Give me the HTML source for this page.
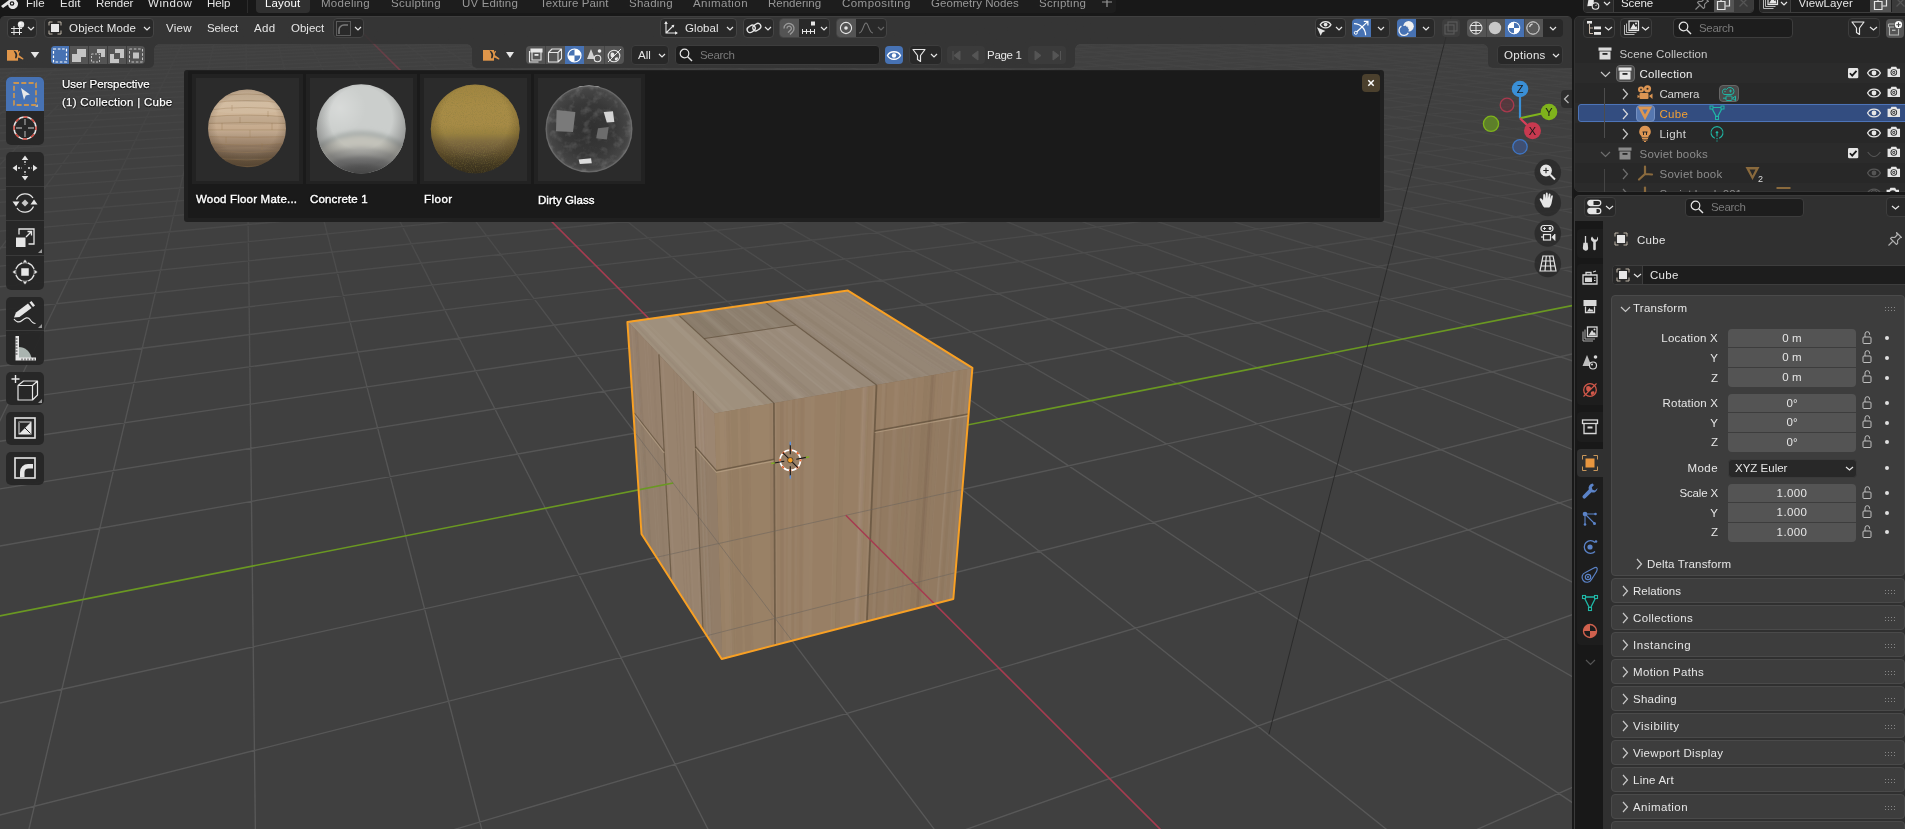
<!DOCTYPE html>
<html lang="en"><head><meta charset="utf-8"><title>Blender</title>
<style>
*{box-sizing:border-box;margin:0;padding:0}
html,body{width:1905px;height:829px;overflow:hidden;background:#181818}
body{position:relative;font-family:"Liberation Sans",sans-serif;font-size:11.5px;color:#e6e6e6;line-height:14px;white-space:nowrap}
.a{position:absolute}
.t{position:absolute;height:14px;line-height:14px}
.btn{position:absolute;background:#282828;border:1px solid #3d3d3d;border-radius:4px}
.btn.hd{background:rgba(40,40,40,.92);border-color:#444}
.blue{background:#4772b3!important;border-color:#4772b3!important}
.fld{position:absolute;background:#1d1d1d;border:1px solid #3d3d3d;border-radius:4px}
.num{position:absolute;background:#545454;color:#e6e6e6;text-align:center;line-height:19px;height:19px;left:1728px;width:128px}
.lbl{position:absolute;text-align:right;width:110px;left:1608px;height:14px}
.pan{position:absolute;left:1611px;width:293.5px;background:#3d3d3d;border-radius:4px;border:1px solid #4a4a4a}
.pan .h{position:absolute;left:21px;top:4px;color:#e6e6e6}
svg{position:absolute;overflow:visible}
.ic{position:absolute}
.sh{text-shadow:0 0 2px #000,0 1px 1px #000}
.gr{color:#989898}
#root{position:absolute;left:0;top:0;width:1905px;height:829px;will-change:transform}
</style></head><body><div id="root">
<!-- TOP BAR -->
<div class="a" id="topbar" style="left:0;top:0;width:1905px;height:16px;background:#181818"></div>
<svg class="ic" style="left:0;top:-6px" width="18" height="16" viewBox="0 0 18 16"><path d="M1 12 L9 6 L4 6 L4 4 L11 4 L9.5 2.5 L11 1.5 L16.5 6.5 A5 5 0 1 1 8 10.5 L3 14 Z" fill="#e6e6e6"/><circle cx="12" cy="9.5" r="2.3" fill="#181818"/><circle cx="12" cy="9.5" r="1.1" fill="#e6e6e6"/></svg>
<div class="t" style="left:26px;top:-4px">File</div>
<div class="t" style="left:60px;top:-4px;letter-spacing:0.22px">Edit</div>
<div class="t" style="left:96px;top:-4px;letter-spacing:-0.08px">Render</div>
<div class="t" style="left:148px;top:-4px;letter-spacing:0.56px">Window</div>
<div class="t" style="left:207px;top:-4px;letter-spacing:-0.05px">Help</div>
<div class="a" style="left:247px;top:-2px;width:1px;height:14.5px;background:#2c2c2c"></div>
<div class="a" style="left:256px;top:-4px;width:860px;height:16.5px;background:#1d1d1d;border-radius:4px"></div>
<div class="a" style="left:256px;top:-4px;width:54px;height:16.5px;background:#303030;border-radius:4px"></div>
<div class="t" style="left:265px;top:-4px;color:#fff;letter-spacing:0.15px">Layout</div>
<div class="t gr" style="left:321px;top:-4px;letter-spacing:0.29px">Modeling</div>
<div class="t gr" style="left:391px;top:-4px;letter-spacing:0.3px">Sculpting</div>
<div class="t gr" style="left:462px;top:-4px;letter-spacing:0.16px">UV Editing</div>
<div class="t gr" style="left:540px;top:-4px;letter-spacing:0.11px">Texture Paint</div>
<div class="t gr" style="left:629px;top:-4px;letter-spacing:0.23px">Shading</div>
<div class="t gr" style="left:693px;top:-4px;letter-spacing:0.43px">Animation</div>
<div class="t gr" style="left:768px;top:-4px">Rendering</div>
<div class="t gr" style="left:842px;top:-4px;letter-spacing:0.46px">Compositing</div>
<div class="t gr" style="left:931px;top:-4px;letter-spacing:0.06px">Geometry Nodes</div>
<div class="t gr" style="left:1039px;top:-4px;letter-spacing:0.28px">Scripting</div>
<svg class="ic" style="left:1101px;top:-4px" width="12" height="12"><path d="M6 1v10M1 6h10" stroke="#989898" stroke-width="1.2" fill="none"/></svg>
<!-- scene selector -->
<div class="a" style="left:1582.5px;top:-8px;width:171px;height:20.5px;background:#1d1d1d;border:1px solid #3d3d3d;border-radius:4px"></div>
<div class="a" style="left:1583.5px;top:-7px;width:30px;height:18.5px;background:#282828;border-right:1px solid #3d3d3d;border-radius:3px 0 0 3px"></div>
<svg class="ic" style="left:1585px;top:-5.5px" width="16" height="16" viewBox="0 0 16 16"><path d="M3 1l5 0 1.5 9-6 2z" fill="#e6e6e6" transform="rotate(12 6 6)"/><circle cx="10.5" cy="11" r="3.3" fill="#282828" stroke="#e6e6e6" stroke-width="1.1"/><path d="M10.5 11l1.5-1.5" stroke="#e6e6e6" stroke-width="1"/></svg>
<svg class="ic" style="left:1603px;top:1px" width="8" height="6"><path d="M1 1l3 3 3-3" stroke="#e6e6e6" stroke-width="1.2" fill="none"/></svg>
<div class="t" style="left:1621px;top:-4px;letter-spacing:-0.1px">Scene</div>
<svg class="ic" style="left:1694px;top:-5px" width="16" height="16" viewBox="0 0 16 16"><path d="M9.5 1.5l5 5-1.5.3-2.5 2.5.2 3-1.2 1.2-6-6 1.2-1.2 3 .2 2.5-2.5zM6 10l-4.5 4.5" fill="none" stroke="#8a8a8a" stroke-width="1.1" stroke-linejoin="round"/></svg>
<div class="a" style="left:1713.5px;top:-7px;width:20px;height:18.5px;background:#545454"></div>
<svg class="ic" style="left:1716px;top:-4.5px" width="15" height="15" viewBox="0 0 15 15"><path d="M1.5 5.5h7.5v8h-7.5z" fill="none" stroke="#e6e6e6" stroke-width="1.2"/><path d="M5 5V1.5h8.5v8.5H9.5" fill="none" stroke="#e6e6e6" stroke-width="1.2"/></svg>
<div class="a" style="left:1734px;top:-7px;width:18.5px;height:18.5px;background:#3a3a3a;border-radius:0 3px 3px 0"></div>
<svg class="ic" style="left:1738px;top:-3px" width="11" height="11"><path d="M1.5 1.5l8 8M9.5 1.5l-8 8" stroke="#555" stroke-width="1.2"/></svg>
<div class="a" style="left:1759px;top:-8px;width:160px;height:20.5px;background:#1d1d1d;border:1px solid #3d3d3d;border-radius:4px"></div>
<div class="a" style="left:1760px;top:-7px;width:31px;height:18.5px;background:#282828;border-right:1px solid #3d3d3d;border-radius:3px 0 0 3px"></div>
<svg class="ic" style="left:1762px;top:-6px" width="17" height="16" viewBox="0 0 17 16"><path d="M1.5 5v9.5h10M3.5 3.5v9h10" stroke="#b8b8b8" stroke-width="1" fill="none"/><rect x="6" y="1" width="9.5" height="9.5" fill="none" stroke="#e6e6e6" stroke-width="1.2"/><path d="M7 9.5l3.5-6 2 3.5 1-1 1 3.5z" fill="#e6e6e6"/></svg>
<svg class="ic" style="left:1780px;top:1px" width="8" height="6"><path d="M1 1l3 3 3-3" stroke="#e6e6e6" stroke-width="1.2" fill="none"/></svg>
<div class="t" style="left:1798.5px;top:-4px;letter-spacing:0.1px">ViewLayer</div>
<div class="a" style="left:1870px;top:-7px;width:21px;height:18.5px;background:#545454"></div>
<svg class="ic" style="left:1873px;top:-4.5px" width="15" height="15" viewBox="0 0 15 15"><path d="M1.5 5.5h7.5v8h-7.5z" fill="none" stroke="#e6e6e6" stroke-width="1.2"/><path d="M5 5V1.5h8.5v8.5H9.5" fill="none" stroke="#e6e6e6" stroke-width="1.2"/></svg>
<div class="a" style="left:1891.5px;top:-7px;width:18.5px;height:18.5px;background:#3a3a3a"></div>
<svg class="ic" style="left:1895px;top:-3px" width="11" height="11"><path d="M1.5 1.5l8 8M9.5 1.5l-8 8" stroke="#555" stroke-width="1.2"/></svg>
<!-- 3D VIEWPORT -->
<div class="a" id="vp" style="left:0;top:16px;width:1572px;height:813px;background:#404040;border-radius:5px 5px 0 0;overflow:hidden">
<svg style="left:0;top:-16px" width="1572" height="829" viewBox="0 0 1572 829">
<defs>
<linearGradient id="gfade" x1="0" y1="-85" x2="0" y2="829" gradientUnits="userSpaceOnUse">
<stop offset="0" stop-color="#000000"/><stop offset="0.06" stop-color="#141414"/><stop offset="0.112" stop-color="#232323"/><stop offset="0.171" stop-color="#282828"/><stop offset="0.237" stop-color="#333333"/><stop offset="0.313" stop-color="#565656"/><stop offset="0.42" stop-color="#9e9e9e"/><stop offset="0.53" stop-color="#d8d8d8"/><stop offset="0.6" stop-color="#eaeaea"/><stop offset="1" stop-color="#ffffff"/>
</linearGradient>
<mask id="gmask" maskUnits="userSpaceOnUse" x="0" y="0" width="1572" height="829"><rect x="0" y="0" width="1572" height="829" fill="url(#gfade)"/></mask>
<linearGradient id="afade" x1="0" y1="-85" x2="0" y2="829" gradientUnits="userSpaceOnUse"><stop offset="0" stop-color="#000000"/><stop offset="0.08" stop-color="#070707"/><stop offset="0.112" stop-color="#141414"/><stop offset="0.14" stop-color="#4c4c4c"/><stop offset="0.171" stop-color="#7f7f7f"/><stop offset="0.237" stop-color="#bfbfbf"/><stop offset="0.36" stop-color="#ffffff"/><stop offset="1" stop-color="#ffffff"/></linearGradient>
<mask id="amask" maskUnits="userSpaceOnUse" x="0" y="0" width="1572" height="829"><rect x="0" y="0" width="1572" height="829" fill="url(#afade)"/></mask>
<linearGradient id="wtop" x1="628" y1="322" x2="972" y2="368" gradientUnits="userSpaceOnUse"><stop offset="0" stop-color="#9c8f7b"/><stop offset="1" stop-color="#9a8b78"/></linearGradient>
<linearGradient id="wleft" x1="628" y1="0" x2="722" y2="0" gradientUnits="userSpaceOnUse"><stop offset="0" stop-color="#9d8771"/><stop offset="1" stop-color="#9a826a"/></linearGradient>
<linearGradient id="wright" x1="715" y1="0" x2="972" y2="0" gradientUnits="userSpaceOnUse"><stop offset="0" stop-color="#a38769"/><stop offset="0.5" stop-color="#a0866a"/><stop offset="1" stop-color="#987f66"/></linearGradient>
<clipPath id="cubeclip"><polygon points="627.4,322.0 847.9,290.6 972.4,367.9 953.3,599.0 721.7,659.0 641.5,534.0"/></clipPath>
</defs>
<g mask="url(#gmask)"><path d="M-2.0 10.7L25.5 10.0M-2.0 12.2L80.1 10.0M-2.0 13.7L134.7 10.0M-2.0 15.3L189.2 10.0M-2.0 16.9L243.6 10.0M-2.0 18.6L298.1 10.0M-2.0 20.3L352.4 10.0M-2.0 22.1L406.8 10.0M-2.0 24.0L461.1 10.0M-2.0 25.9L515.3 10.0M-2.0 27.9L569.5 10.0M-2.0 29.9L623.7 10.0M-2.0 32.1L677.8 10.0M-2.0 34.3L731.9 10.0M-2.0 36.6L785.9 10.0M-2.0 39.0L839.9 10.0M-2.0 41.5L893.9 10.0M-2.0 44.0L947.8 10.0M-2.0 46.7L1001.6 10.0M-2.0 49.5L1055.5 10.0M-2.0 52.5L1109.2 10.0M-2.0 55.5L1163.0 10.0M-2.0 58.7L1216.7 10.0M-2.0 62.1L1270.3 10.0M-2.0 65.6L1323.9 10.0M-2.0 69.3L1377.5 10.0M-2.0 73.1L1431.0 10.0M-2.0 77.2L1484.5 10.0M-2.0 81.5L1537.9 10.0M-2.0 86.0L1574.0 10.8M-2.0 90.7L1574.0 13.5M-2.0 95.7L1574.0 16.3M-2.0 101.1L1574.0 19.2M-2.0 106.7L1574.0 22.3M-2.0 112.7L1574.0 25.7M-2.0 119.1L1574.0 29.2M-2.0 125.9L1574.0 33.0M-2.0 133.1L1574.0 37.0M-2.0 140.9L1574.0 41.3M-2.0 149.3L1574.0 46.0M-2.0 158.3L1574.0 51.0M-2.0 168.0L1574.0 56.4M-2.0 178.6L1574.0 62.2M-2.0 190.0L1574.0 68.6M-2.0 202.5L1574.0 75.5M-2.0 216.2L1574.0 83.1M-2.0 231.3L1574.0 91.5M-2.0 247.9L1574.0 100.7M-2.0 266.3L1574.0 111.0M-2.0 287.0L1574.0 122.4M-2.0 310.2L1574.0 135.3M-2.0 336.5L1574.0 149.9M-2.0 366.5L1574.0 166.6M-2.0 401.2L1574.0 185.8M-2.0 441.5L1574.0 208.2M-2.0 489.2L1574.0 234.7M-2.0 546.4L1574.0 266.4M-2.0 703.5L1574.0 353.6M-2.0 815.5L1574.0 415.8M449.4 831.0L1574.0 498.5M961.7 831.0L1574.0 614.0M1473.5 831.0L1574.0 786.6M9.5 10.0L-2.0 14.7M33.2 10.0L-2.0 25.8M56.8 10.0L-2.0 39.8M80.4 10.0L-2.0 57.8M104.0 10.0L-2.0 81.9M127.7 10.0L-2.0 115.7M151.3 10.0L-2.0 166.5M174.9 10.0L-2.0 251.9M198.4 10.0L-2.0 424.7M222.0 10.0L28.5 831.0M245.6 10.0L255.4 831.0M269.2 10.0L482.2 831.0M292.7 10.0L708.9 831.0M316.3 10.0L935.5 831.0M363.3 10.0L1388.5 831.0M386.9 10.0L1574.0 803.7M410.4 10.0L1574.0 677.7M433.9 10.0L1574.0 583.0M457.4 10.0L1574.0 509.3M480.9 10.0L1574.0 450.2M504.4 10.0L1574.0 401.8M527.8 10.0L1574.0 361.5M551.3 10.0L1574.0 327.3M574.8 10.0L1574.0 298.0M598.2 10.0L1574.0 272.6M621.7 10.0L1574.0 250.4M645.1 10.0L1574.0 230.7M668.5 10.0L1574.0 213.3M691.9 10.0L1574.0 197.7M715.4 10.0L1574.0 183.6M738.8 10.0L1574.0 170.9M762.1 10.0L1574.0 159.3M785.5 10.0L1574.0 148.7M808.9 10.0L1574.0 139.0M832.3 10.0L1574.0 130.1M855.6 10.0L1574.0 121.9M879.0 10.0L1574.0 114.3M902.3 10.0L1574.0 107.2M925.7 10.0L1574.0 100.6M949.0 10.0L1574.0 94.5M972.3 10.0L1574.0 88.7M995.7 10.0L1574.0 83.3M1019.0 10.0L1574.0 78.2M1042.3 10.0L1574.0 73.5M1065.5 10.0L1574.0 69.0M1088.8 10.0L1574.0 64.7M1112.1 10.0L1574.0 60.7M1135.4 10.0L1574.0 56.9M1158.6 10.0L1574.0 53.3M1181.9 10.0L1574.0 49.8M1205.1 10.0L1574.0 46.6M1228.4 10.0L1574.0 43.4M1251.6 10.0L1574.0 40.5M1274.8 10.0L1574.0 37.6M1298.0 10.0L1574.0 34.9M1321.2 10.0L1574.0 32.4M1344.4 10.0L1574.0 29.9M1367.6 10.0L1574.0 27.5M1390.8 10.0L1574.0 25.2M1413.9 10.0L1574.0 23.0M1437.1 10.0L1574.0 20.9M1460.3 10.0L1574.0 18.9M1483.4 10.0L1574.0 17.0M1506.5 10.0L1574.0 15.1M1529.7 10.0L1574.0 13.3M1552.8 10.0L1574.0 11.5" stroke="#585858" stroke-width="1.35" fill="none"/></g>
<g mask="url(#amask)"><path d="M339.8 10.0L1162.0 831.0" stroke="#a63c50" stroke-width="1.6" fill="none"/>
<path d="M-2.0 616.3L1574.0 305.2" stroke="#6a9822" stroke-width="1.6" fill="none"/></g>
<polyline points="1268.9,734.4 1452.7,10.3" stroke="#262626" stroke-width="1" stroke-opacity=".8" fill="none"/>
<!-- cube -->
<g>
<polygon points="627.9,321.6 848.1,291.0 972.0,368.3 714.6,413.5" fill="#998a79"/>
<polygon points="627.9,321.6 714.6,413.5 722.3,659.2 642.3,534.6" fill="#94806b"/>
<polygon points="714.6,413.5 972.0,368.3 953.1,598.4 722.3,659.2" fill="#977e65"/>
<polygon points="627.9,321.6 714.6,413.5 773.9,403.1 678.0,314.6" fill="#9f907d"/>
<polygon points="678.0,314.6 773.9,403.1 876.5,385.1 765.5,302.5" fill="#998a79"/>
<polygon points="765.5,302.5 876.5,385.1 972.0,368.3 848.1,291.0" fill="#958675"/>
<polygon points="678.0,314.6 704.0,338.6 795.8,325.0 765.5,302.5" fill="#8c7e6d"/>
<polygon points="769.5,301.9 881.2,384.2 887.0,383.2 774.5,301.2" fill="#3a2a1a" fill-opacity="0.022"/>
<polygon points="697.7,311.9 797.1,399.0 803.1,398.0 702.8,311.2" fill="#fff" fill-opacity="0.04"/>
<polygon points="806.1,296.8 923.7,376.8 927.1,376.2 809.1,296.4" fill="#fff" fill-opacity="0.023"/>
<polygon points="687.4,313.3 785.0,401.2 788.7,400.5 690.6,312.9" fill="#3a2a1a" fill-opacity="0.032"/>
<polygon points="847.1,291.1 971.0,368.5 972.0,368.3 848.1,291.0" fill="#3a2a1a" fill-opacity="0.045"/>
<polygon points="678.3,314.6 774.3,403.0 776.5,402.6 680.2,314.3" fill="#3a2a1a" fill-opacity="0.016"/>
<polygon points="636.4,320.4 724.7,411.8 729.0,411.0 640.0,319.9" fill="#fff" fill-opacity="0.043"/>
<polygon points="770.4,301.8 882.2,384.1 886.1,383.4 773.7,301.3" fill="#fff" fill-opacity="0.022"/>
<polygon points="630.7,321.2 717.9,412.9 720.4,412.5 632.8,320.9" fill="#3a2a1a" fill-opacity="0.021"/>
<polygon points="713.3,309.7 815.5,395.8 816.9,395.6 714.5,309.6" fill="#3a2a1a" fill-opacity="0.02"/>
<polygon points="690.3,312.9 788.4,400.6 794.5,399.5 695.4,312.2" fill="#3a2a1a" fill-opacity="0.04"/>
<polygon points="772.7,301.5 884.9,383.6 889.8,382.7 777.0,300.9" fill="#fff" fill-opacity="0.031"/>
<polygon points="744.0,305.5 851.5,389.5 857.2,388.5 748.9,304.8" fill="#fff" fill-opacity="0.033"/>
<polygon points="642.0,319.6 731.3,410.6 734.8,410.0 645.0,319.2" fill="#fff" fill-opacity="0.02"/>
<polygon points="810.2,296.3 928.3,376.0 931.4,375.4 812.8,295.9" fill="#3a2a1a" fill-opacity="0.033"/>
<polygon points="765.2,302.5 876.2,385.1 880.6,384.3 769.1,302.0" fill="#3a2a1a" fill-opacity="0.02"/>
<polygon points="729.1,307.5 834.0,392.5 836.6,392.1 731.3,307.2" fill="#fff" fill-opacity="0.018"/>
<polygon points="841.5,291.9 964.5,369.6 966.7,369.2 843.4,291.7" fill="#3a2a1a" fill-opacity="0.024"/>
<polygon points="822.2,294.6 942.2,373.5 946.6,372.8 826.0,294.1" fill="#fff" fill-opacity="0.04"/>
<polygon points="836.8,292.6 959.1,370.6 964.5,369.6 841.5,291.9" fill="#3a2a1a" fill-opacity="0.019"/>
<polygon points="673.0,315.3 768.1,404.1 774.5,403.0 678.5,314.6" fill="#3a2a1a" fill-opacity="0.02"/>
<polygon points="824.3,294.3 944.6,373.1 948.9,372.4 827.9,293.8" fill="#3a2a1a" fill-opacity="0.026"/>
<polygon points="722.6,308.4 826.4,393.9 828.9,393.4 724.8,308.1" fill="#fff" fill-opacity="0.041"/>
<polygon points="735.2,306.7 841.1,391.3 845.3,390.6 738.7,306.2" fill="#fff" fill-opacity="0.038"/>
<polygon points="633.9,320.8 721.7,412.3 725.2,411.7 636.9,320.4" fill="#fff" fill-opacity="0.019"/>
<polygon points="841.4,291.9 964.3,369.6 968.6,368.9 845.1,291.4" fill="#fff" fill-opacity="0.031"/>
<polygon points="821.9,294.6 941.9,373.6 944.8,373.1 824.4,294.3" fill="#3a2a1a" fill-opacity="0.036"/>
<polygon points="710.2,310.2 811.8,396.4 815.9,395.7 713.6,309.7" fill="#3a2a1a" fill-opacity="0.042"/>
<polygon points="663.5,316.7 756.7,406.1 763.2,405.0 669.0,315.9" fill="#fff" fill-opacity="0.038"/>
<polygon points="808.9,296.4 926.9,376.2 928.8,375.9 810.6,296.2" fill="#fff" fill-opacity="0.039"/>
<polygon points="631.3,321.1 718.6,412.8 723.6,411.9 635.5,320.5" fill="#3a2a1a" fill-opacity="0.03"/>
<polygon points="791.1,298.9 906.2,379.9 908.6,379.4 793.1,298.6" fill="#fff" fill-opacity="0.026"/>
<polygon points="670.0,315.7 764.5,404.8 767.8,404.2 672.8,315.4" fill="#3a2a1a" fill-opacity="0.032"/>
<polygon points="706.7,310.6 807.7,397.2 810.5,396.7 709.1,310.3" fill="#3a2a1a" fill-opacity="0.028"/>
<polygon points="844.1,291.6 967.4,369.1 971.0,368.5 847.2,291.1" fill="#3a2a1a" fill-opacity="0.042"/>
<polygon points="794.7,298.4 910.4,379.1 914.5,378.4 798.2,297.9" fill="#fff" fill-opacity="0.041"/>
<polygon points="722.8,308.4 826.6,393.8 832.7,392.8 728.0,307.7" fill="#fff" fill-opacity="0.028"/>
<polygon points="746.6,305.1 854.5,388.9 860.6,387.9 751.9,304.4" fill="#fff" fill-opacity="0.039"/>
<polygon points="780.6,300.4 894.0,382.0 898.8,381.2 784.7,299.8" fill="#3a2a1a" fill-opacity="0.044"/>
<polygon points="705.1,310.9 805.8,397.5 809.2,396.9 708.0,310.5" fill="#fff" fill-opacity="0.017"/>
<polygon points="677.8,314.7 773.6,403.1 780.0,402.0 683.1,313.9" fill="#3a2a1a" fill-opacity="0.018"/>
<polygon points="764.9,302.6 875.9,385.2 879.5,384.5 768.1,302.1" fill="#3a2a1a" fill-opacity="0.035"/>
<polygon points="699.2,311.7 798.9,398.7 805.3,397.6 704.6,310.9" fill="#fff" fill-opacity="0.034"/>
<polygon points="771.7,301.6 883.8,383.8 885.9,383.4 773.6,301.4" fill="#fff" fill-opacity="0.027"/>
<polygon points="799.2,297.8 915.6,378.2 920.8,377.3 803.7,297.2" fill="#3a2a1a" fill-opacity="0.018"/>
<polygon points="830.3,293.5 951.6,371.9 956.6,371.0 834.6,292.9" fill="#3a2a1a" fill-opacity="0.031"/>
<polygon points="627.9,321.6 658.9,354.4 671.2,579.6 642.3,534.6" fill="#937f6b"/>
<polygon points="658.9,354.4 693.3,390.9 702.9,629.0 671.2,579.6" fill="#98836e"/>
<polygon points="693.3,390.9 714.6,413.5 722.3,659.2 702.9,629.0" fill="#927d68"/>
<polygon points="693.3,390.9 714.6,413.5 716.4,470.7 695.5,446.7" fill="#9c8671"/>
<polygon points="627.9,321.6 658.9,354.4 664.2,451.3 634.1,412.8" fill="#96816d"/>
<polygon points="705.8,404.2 706.7,405.1 715.1,648.0 714.3,646.8" fill="#fff" fill-opacity="0.016"/>
<polygon points="646.7,341.5 647.7,342.6 660.8,563.4 659.9,561.9" fill="#fff" fill-opacity="0.029"/>
<polygon points="630.7,324.5 632.2,326.1 646.3,540.8 644.9,538.6" fill="#fff" fill-opacity="0.032"/>
<polygon points="629.4,323.2 630.5,324.3 644.7,538.3 643.7,536.7" fill="#3a2a1a" fill-opacity="0.028"/>
<polygon points="695.4,393.2 697.6,395.5 706.8,635.1 704.8,632.0" fill="#3a2a1a" fill-opacity="0.02"/>
<polygon points="673.3,369.8 674.1,370.6 685.3,601.6 684.6,600.5" fill="#3a2a1a" fill-opacity="0.039"/>
<polygon points="699.6,397.6 700.4,398.5 709.4,639.2 708.7,637.9" fill="#fff" fill-opacity="0.023"/>
<polygon points="636.1,330.2 637.7,331.9 651.4,548.8 649.9,546.5" fill="#3a2a1a" fill-opacity="0.023"/>
<polygon points="700.4,398.5 703.0,401.2 711.8,642.8 709.5,639.2" fill="#fff" fill-opacity="0.034"/>
<polygon points="702.4,400.6 703.6,401.9 712.4,643.7 711.3,642.0" fill="#3a2a1a" fill-opacity="0.031"/>
<polygon points="676.4,373.1 677.3,374.0 688.3,606.2 687.5,605.0" fill="#3a2a1a" fill-opacity="0.031"/>
<polygon points="696.6,394.4 699.1,397.1 708.2,637.3 705.9,633.7" fill="#fff" fill-opacity="0.033"/>
<polygon points="700.9,399.0 703.7,401.9 712.4,643.8 709.9,639.8" fill="#fff" fill-opacity="0.016"/>
<polygon points="680.2,377.0 681.3,378.2 692.0,612.0 690.9,610.3" fill="#3a2a1a" fill-opacity="0.039"/>
<polygon points="656.8,352.2 657.8,353.3 670.3,578.1 669.3,576.6" fill="#fff" fill-opacity="0.031"/>
<polygon points="635.2,329.3 636.4,330.6 650.2,547.0 649.1,545.2" fill="#fff" fill-opacity="0.032"/>
<polygon points="697.2,395.1 698.8,396.8 708.0,636.9 706.5,634.6" fill="#fff" fill-opacity="0.028"/>
<polygon points="643.8,338.4 644.8,339.4 658.1,559.2 657.1,557.7" fill="#fff" fill-opacity="0.026"/>
<polygon points="633.8,327.8 635.6,329.7 649.5,545.7 647.8,543.1" fill="#3a2a1a" fill-opacity="0.022"/>
<polygon points="633.5,327.5 635.3,329.4 649.2,545.3 647.5,542.7" fill="#fff" fill-opacity="0.018"/>
<polygon points="637.4,331.6 638.1,332.4 651.8,549.4 651.2,548.4" fill="#3a2a1a" fill-opacity="0.022"/>
<polygon points="650.9,345.9 653.0,348.2 665.8,571.1 663.8,568.1" fill="#3a2a1a" fill-opacity="0.02"/>
<polygon points="661.3,357.0 663.6,359.5 675.7,586.5 673.5,583.2" fill="#fff" fill-opacity="0.033"/>
<polygon points="634.9,329.0 636.7,330.8 650.5,547.3 648.8,544.8" fill="#3a2a1a" fill-opacity="0.036"/>
<polygon points="682.3,379.3 683.8,380.9 694.3,615.5 692.9,613.4" fill="#fff" fill-opacity="0.028"/>
<polygon points="690.2,387.6 691.3,388.8 701.1,626.2 700.1,624.6" fill="#fff" fill-opacity="0.028"/>
<polygon points="714.6,413.5 773.9,403.1 775.1,645.3 722.3,659.2" fill="#998166"/>
<polygon points="773.9,403.1 876.5,385.1 866.9,621.1 775.1,645.3" fill="#987f65"/>
<polygon points="876.5,385.1 972.0,368.3 953.1,598.4 866.9,621.1" fill="#927a61"/>
<polygon points="876.5,385.1 972.0,368.3 968.3,414.1 874.7,430.9" fill="#977e64"/>
<polygon points="714.6,413.5 773.9,403.1 774.2,459.3 716.4,470.7" fill="#9c8469"/>
<polygon points="911.8,378.9 917.4,377.9 903.7,611.4 898.6,612.7" fill="#fff" fill-opacity="0.02"/>
<polygon points="924.3,376.7 928.6,375.9 913.8,608.7 909.9,609.8" fill="#3a2a1a" fill-opacity="0.04"/>
<polygon points="957.7,370.8 962.9,369.9 944.8,600.6 940.1,601.8" fill="#3a2a1a" fill-opacity="0.025"/>
<polygon points="885.3,383.5 887.4,383.2 876.7,618.5 874.8,619.0" fill="#3a2a1a" fill-opacity="0.034"/>
<polygon points="905.1,380.0 908.5,379.4 895.7,613.5 892.6,614.3" fill="#fff" fill-opacity="0.025"/>
<polygon points="724.0,411.9 730.1,410.8 736.1,655.5 730.6,657.0" fill="#3a2a1a" fill-opacity="0.025"/>
<polygon points="861.7,387.7 866.7,386.8 858.1,623.4 853.6,624.6" fill="#fff" fill-opacity="0.036"/>
<polygon points="953.1,371.6 956.1,371.1 938.6,602.2 935.9,602.9" fill="#fff" fill-opacity="0.034"/>
<polygon points="970.4,368.6 972.0,368.3 953.1,598.4 951.6,598.8" fill="#3a2a1a" fill-opacity="0.036"/>
<polygon points="953.3,371.6 955.1,371.3 937.7,602.4 936.1,602.9" fill="#fff" fill-opacity="0.04"/>
<polygon points="747.3,407.8 749.6,407.4 753.4,651.0 751.3,651.5" fill="#3a2a1a" fill-opacity="0.026"/>
<polygon points="912.3,378.8 914.4,378.4 901.0,612.1 899.1,612.6" fill="#3a2a1a" fill-opacity="0.02"/>
<polygon points="916.9,378.0 918.4,377.7 904.6,611.2 903.2,611.5" fill="#fff" fill-opacity="0.016"/>
<polygon points="800.8,398.4 803.8,397.9 801.7,638.3 799.0,639.0" fill="#3a2a1a" fill-opacity="0.026"/>
<polygon points="730.6,410.7 737.5,409.5 742.7,653.8 736.5,655.4" fill="#3a2a1a" fill-opacity="0.038"/>
<polygon points="782.7,401.5 786.2,400.9 786.0,642.4 782.9,643.2" fill="#fff" fill-opacity="0.018"/>
<polygon points="723.9,411.9 728.1,411.1 734.3,656.0 730.6,657.0" fill="#fff" fill-opacity="0.019"/>
<polygon points="939.0,374.1 942.5,373.5 926.3,605.4 923.2,606.3" fill="#fff" fill-opacity="0.032"/>
<polygon points="787.9,400.6 792.1,399.9 791.3,641.0 787.6,642.0" fill="#fff" fill-opacity="0.028"/>
<polygon points="882.1,384.1 886.0,383.4 875.4,618.8 871.9,619.8" fill="#fff" fill-opacity="0.035"/>
<polygon points="942.1,373.6 944.1,373.2 927.8,605.0 926.0,605.5" fill="#fff" fill-opacity="0.018"/>
<polygon points="967.3,369.1 972.0,368.3 953.1,598.4 948.7,599.5" fill="#fff" fill-opacity="0.039"/>
<polygon points="772.3,403.4 776.4,402.7 777.2,644.7 773.6,645.7" fill="#fff" fill-opacity="0.038"/>
<polygon points="726.0,411.5 729.2,411.0 735.3,655.8 732.4,656.5" fill="#3a2a1a" fill-opacity="0.017"/>
<polygon points="780.0,402.0 783.9,401.3 784.0,642.9 780.5,643.8" fill="#3a2a1a" fill-opacity="0.034"/>
<polygon points="931.4,375.4 936.3,374.6 920.7,606.9 916.3,608.1" fill="#3a2a1a" fill-opacity="0.036"/>
<polygon points="895.3,381.8 900.2,380.9 888.2,615.5 883.8,616.6" fill="#fff" fill-opacity="0.019"/>
<polygon points="913.8,378.5 915.8,378.2 902.3,611.8 900.4,612.3" fill="#3a2a1a" fill-opacity="0.03"/>
<polygon points="804.9,397.7 811.2,396.5 808.4,636.5 802.7,638.0" fill="#fff" fill-opacity="0.028"/>
<polygon points="740.3,409.0 747.0,407.8 751.1,651.6 745.1,653.2" fill="#3a2a1a" fill-opacity="0.035"/>
<polygon points="792.3,399.9 797.9,398.9 796.4,639.6 791.4,641.0" fill="#3a2a1a" fill-opacity="0.031"/>
<polygon points="960.4,370.3 963.6,369.8 945.5,600.4 942.6,601.2" fill="#fff" fill-opacity="0.032"/>
<polygon points="932.9,375.2 935.7,374.7 920.2,607.1 917.6,607.7" fill="#3a2a1a" fill-opacity="0.02"/>
<polygon points="862.7,387.5 867.8,386.6 859.1,623.1 854.5,624.4" fill="#fff" fill-opacity="0.033"/>
<polygon points="719.0,412.8 725.8,411.6 732.2,656.6 726.2,658.2" fill="#fff" fill-opacity="0.025"/>
<polygon points="904.9,380.1 908.7,379.4 895.9,613.5 892.4,614.4" fill="#3a2a1a" fill-opacity="0.017"/>
<polygon points="865.5,387.0 869.6,386.3 860.7,622.7 857.0,623.7" fill="#3a2a1a" fill-opacity="0.016"/>
<polygon points="837.3,392.0 841.8,391.2 835.8,629.3 831.7,630.4" fill="#3a2a1a" fill-opacity="0.017"/>
<polygon points="873.2,385.7 875.6,385.2 866.1,621.3 863.9,621.9" fill="#fff" fill-opacity="0.037"/>
<polygon points="769.5,403.9 773.4,403.2 774.6,645.4 771.2,646.3" fill="#3a2a1a" fill-opacity="0.033"/>
<polygon points="863.1,387.4 868.5,386.5 859.7,623.0 854.9,624.3" fill="#fff" fill-opacity="0.031"/>
<polygon points="929.0,375.9 933.4,375.1 918.2,607.6 914.1,608.7" fill="#3a2a1a" fill-opacity="0.025"/>
<polygon points="864.4,387.2 867.6,386.6 858.9,623.2 856.0,624.0" fill="#3a2a1a" fill-opacity="0.025"/>
<polygon points="840.9,391.3 846.0,390.4 839.5,628.3 834.9,629.5" fill="#3a2a1a" fill-opacity="0.023"/>
<polygon points="930.9,375.5 933.9,375.0 918.6,607.5 915.8,608.2" fill="#3a2a1a" fill-opacity="0.035"/>
<polygon points="835.9,392.2 840.8,391.3 834.9,629.5 830.4,630.7" fill="#fff" fill-opacity="0.025"/>
<polygon points="938.9,374.1 942.9,373.4 926.7,605.3 923.1,606.3" fill="#3a2a1a" fill-opacity="0.032"/>
<polygon points="894.3,381.9 898.5,381.2 886.6,615.9 882.9,616.9" fill="#fff" fill-opacity="0.02"/>
<polygon points="795.1,399.4 798.0,398.9 796.6,639.6 794.0,640.3" fill="#fff" fill-opacity="0.04"/>
<polygon points="811.0,396.6 814.7,395.9 811.5,635.7 808.2,636.6" fill="#fff" fill-opacity="0.03"/>
</g>
<g fill="none" stroke="#5f4e3a" stroke-opacity=".7">
<polyline points="678.0,314.6 773.9,403.1" stroke-width="1.2"/>
<polyline points="773.9,403.1 775.1,645.3" stroke-width="1.8"/>
<polyline points="765.5,302.5 876.5,385.1" stroke-width="1.2"/>
<polyline points="876.5,385.1 866.9,621.1" stroke-width="1.8"/>
<polyline points="704.0,338.6 795.8,325.0" stroke-width="1"/>
<polyline points="658.9,354.4 671.2,579.6" stroke-width="1.2"/>
<polyline points="693.3,390.9 702.9,629.0" stroke-width="1.2"/>
<polyline points="634.1,412.8 664.2,451.3" stroke-width="1.3"/>
<polyline points="695.5,446.7 716.4,470.7 774.2,459.3" stroke-width="1.5"/>
<polyline points="874.7,430.9 968.3,414.1" stroke-width="1.5"/>
</g>
<g fill="none" stroke="#cdb69a" stroke-opacity=".45" stroke-width="1.2" transform="translate(0,1.6)">
<polyline points="634.1,412.8 664.2,451.3"/>
<polyline points="695.5,446.7 716.4,470.7 774.2,459.3"/>
<polyline points="874.7,430.9 968.3,414.1"/>
</g>
<!-- grid lines over lower half of cube -->
<g clip-path="url(#cubeclip)" stroke="#6b655c" stroke-width="1" fill="none" stroke-opacity=".55">
<polyline points="635.5,433.2 718.7,543.5 962.1,489.5"/>
<polyline points="845.8,515.3 3458.5,3124.1" stroke="#a63c50" stroke-width="1.6" stroke-opacity="1"/>
<polyline points="-812.6,776.3 673.1,483.0" stroke="#6a9822" stroke-width="1.6" stroke-opacity="1"/>
<polyline points="-1248.6,1131.6 1730.9,376.0"/>
<polyline points="-1636.5,1447.8 1856.5,414.9"/>
<polyline points="402.4,226.5 3382.7,6106.0"/>
<polyline points="718.7,543.5 3432.6,4141.9"/>
<polyline points="962.1,489.5 3474.4,2501.5"/>
<polyline points="-677.9,666.5 635.5,433.2"/>
<polyline points="-993.3,923.6 718.7,543.5"/>
</g>
<polygon points="627.4,322.0 847.9,290.6 972.4,367.9 953.3,599.0 721.7,659.0 641.5,534.0" fill="none" stroke="#f8a024" stroke-width="2" stroke-linejoin="round"/>
<!-- 3d cursor + origin -->
<g transform="translate(790.3,460.2)">
<circle r="10.2" fill="none" stroke="#fff" stroke-width="1.7"/>
<circle r="10.2" fill="none" stroke="#e8602a" stroke-width="1.7" stroke-dasharray="2.6 5.41" stroke-dashoffset="1.3"/>
<path d="M-16 2.8L-6 1M6 -1L16 -2.8M0 -16V-6M0 6V16M-7.5 -7.5L7.5 7.5" stroke="#141414" stroke-width="1.1"/>
<path d="M0 -18.5V-15M0 15V18.5" stroke="#5d8fd6" stroke-width="1.4"/>
<path d="M-19 3.3L-15.5 2.7M15.5 -2.7L19 -3.3" stroke="#7db11f" stroke-width="1.4"/>
<circle r="2.7" fill="#f8a024" stroke="#2a2a2a" stroke-width=".7"/>
</g>
</svg>
</div>
<!-- viewport header row 1 -->
<div class="a" style="left:0;top:16px;width:1572px;height:27.7px;background:rgba(48,48,48,.72);border-radius:5px 5px 0 0"></div>
<div class="a" style="left:0;top:43.7px;width:154px;height:24px;background:rgba(48,48,48,.72);border-radius:0 0 5px 0"></div>
<div class="a" style="left:472px;top:43.7px;width:603px;height:24.6px;background:rgba(48,48,48,.72);border-radius:0 0 5px 5px"></div>
<div class="a" style="left:1488px;top:43.7px;width:84px;height:24px;background:rgba(48,48,48,.72);border-radius:0 0 0 5px"></div>
<div class="a" style="left:4px;top:16px;width:1564px;height:1px;background:rgba(255,255,255,.05)"></div>
<div class="a" style="left:154px;top:43.7px;width:5px;height:5px;background:radial-gradient(circle at 100% 100%,transparent 4.5px,rgba(48,48,48,.72) 5px)"></div>
<div class="a" style="left:467px;top:43.7px;width:5px;height:5px;background:radial-gradient(circle at 0 100%,transparent 4.5px,rgba(48,48,48,.72) 5px)"></div>
<div class="a" style="left:1075px;top:43.7px;width:5px;height:5px;background:radial-gradient(circle at 100% 100%,transparent 4.5px,rgba(48,48,48,.72) 5px)"></div>
<div class="a" style="left:1483px;top:43.7px;width:5px;height:5px;background:radial-gradient(circle at 0 100%,transparent 4.5px,rgba(48,48,48,.72) 5px)"></div>
<!-- editor type -->
<div class="btn hd" style="left:7px;top:18.4px;width:30px;height:19.3px"></div>
<svg class="ic" style="left:10px;top:20px" width="16" height="16" viewBox="0 0 16 16"><path d="M1 8.5h11M1 12.5h11M4 6v9M9.5 6v9" stroke="#e6e6e6" stroke-width="1" fill="none"/><circle cx="11" cy="4.5" r="3.2" fill="#e6e6e6"/><circle cx="10" cy="3.5" r="1.2" fill="#fff"/></svg>
<svg class="ic" style="left:27px;top:26.2px" width="8" height="6"><path d="M1 1l3 3 3-3" stroke="#e6e6e6" stroke-width="1.2" fill="none"/></svg>
<!-- object mode -->
<div class="btn hd" style="left:44px;top:18.4px;width:110px;height:19.3px"></div>
<svg class="ic" style="left:47px;top:20px" width="16" height="16" viewBox="0 0 16 16"><rect x="4" y="4" width="8" height="8" fill="#e6e6e6"/><path d="M2 5.5V2h3.5M10.5 2H14v3.5M14 10.5V14h-3.5M5.5 14H2v-3.5" stroke="#cfc5b5" stroke-width=".9" fill="none"/></svg>
<div class="t" style="left:69px;top:21px;letter-spacing:0.18px">Object Mode</div>
<svg class="ic" style="left:143px;top:26.2px" width="8" height="6"><path d="M1 1l3 3 3-3" stroke="#e6e6e6" stroke-width="1.2" fill="none"/></svg>
<div class="t" style="left:166px;top:21px;letter-spacing:0.26px">View</div>
<div class="t" style="left:207px;top:21px;letter-spacing:-0.15px">Select</div>
<div class="t" style="left:254px;top:21px;letter-spacing:0.32px">Add</div>
<div class="t" style="left:291px;top:21px">Object</div>
<div class="btn hd" style="left:333px;top:18.4px;width:31px;height:19.3px"></div>
<svg class="ic" style="left:336px;top:21px" width="15" height="15" viewBox="0 0 15 15"><rect x=".5" y=".5" width="14" height="14" fill="none" stroke="#5a5a5a"/><path d="M3 13V9a5 5 0 0 1 5-5h4" stroke="#7a7a7a" stroke-width="1.6" fill="none"/></svg>
<svg class="ic" style="left:354px;top:26.2px" width="8" height="6"><path d="M1 1l3 3 3-3" stroke="#e6e6e6" stroke-width="1.2" fill="none"/></svg>
<!-- centre group -->
<div class="btn hd" style="left:660px;top:18.4px;width:77px;height:19.3px"></div>
<svg class="ic" style="left:663px;top:20px" width="16" height="16" viewBox="0 0 16 16"><path d="M3 2v11h11M3 13l7-7" stroke="#e6e6e6" stroke-width="1.1" fill="none"/><path d="M1.2 4L3 1l1.8 3zM12 11.2l3 1.8-3 1.8zM8.3 5.2l3-.5-.5 3z" fill="#e6e6e6"/></svg>
<div class="t" style="left:685px;top:21px;letter-spacing:0.07px">Global</div>
<svg class="ic" style="left:726px;top:26.2px" width="8" height="6"><path d="M1 1l3 3 3-3" stroke="#e6e6e6" stroke-width="1.2" fill="none"/></svg>
<div class="btn hd" style="left:743px;top:18.4px;width:31px;height:19.3px"></div>
<svg class="ic" style="left:746px;top:20px" width="16" height="16" viewBox="0 0 16 16"><g fill="none" stroke="#e6e6e6" stroke-width="1.3"><rect x="1" y="6" width="8.5" height="6" rx="3" transform="rotate(-35 5 9)"/><rect x="6.5" y="4" width="8.5" height="6" rx="3" transform="rotate(-35 11 7)"/></g></svg>
<svg class="ic" style="left:764px;top:26.2px" width="8" height="6"><path d="M1 1l3 3 3-3" stroke="#e6e6e6" stroke-width="1.2" fill="none"/></svg>
<div class="btn hd" style="left:779px;top:18.4px;width:51px;height:19.3px"></div>
<div class="a" style="left:780px;top:19.4px;width:19px;height:17.3px;background:#545454;border-radius:3px 0 0 3px"></div>
<svg class="ic" style="left:781px;top:20px" width="16" height="16" viewBox="0 0 16 16"><path d="M3 8.5A5 5 0 1 1 11.5 12L9 14.5M6 8.5a2.2 2.2 0 1 1 3.6 1.6L7 12.6" stroke="#9a9a9a" stroke-width="1.3" fill="none"/></svg>
<svg class="ic" style="left:801px;top:20px" width="16" height="16" viewBox="0 0 16 16"><path d="M1 11.5h13M1.5 9v5M5.5 9v5M9.5 9v5M13.5 9v5" stroke="#e6e6e6" stroke-width="1" fill="none"/><rect x="10" y="1.5" width="4" height="4" fill="#e6e6e6"/></svg>
<svg class="ic" style="left:820px;top:26.2px" width="8" height="6"><path d="M1 1l3 3 3-3" stroke="#e6e6e6" stroke-width="1.2" fill="none"/></svg>
<div class="btn hd" style="left:836px;top:18.4px;width:51px;height:19.3px"></div>
<div class="a" style="left:837px;top:19.4px;width:19px;height:17.3px;background:#545454;border-radius:3px 0 0 3px"></div>
<svg class="ic" style="left:838px;top:20px" width="16" height="16" viewBox="0 0 16 16"><circle cx="8" cy="8" r="5.6" fill="none" stroke="#e6e6e6" stroke-width="1.1"/><circle cx="8" cy="8" r="1.8" fill="#e6e6e6"/></svg>
<svg class="ic" style="left:858px;top:20px" width="16" height="16" viewBox="0 0 16 16"><path d="M1 13c4 0 4.5-10 7-10s3 10 7 10" stroke="#777" stroke-width="1.1" fill="none"/></svg>
<svg class="ic" style="left:877px;top:26.2px" width="8" height="6"><path d="M1 1l3 3 3-3" stroke="#666" stroke-width="1.2" fill="none"/></svg>
<!-- right group -->
<div class="btn hd" style="left:1315px;top:18.4px;width:31px;height:19.3px"></div>
<svg class="ic" style="left:1315px;top:18px" width="20" height="20" viewBox="1315 18 20 20"><path d="M1320.2 24.7C1322.5 20.6 1328.7 20.6 1331 24.7 1328.7 28.8 1322.5 28.8 1320.2 24.7z" fill="none" stroke="#e6e6e6" stroke-width="1.3"/><circle cx="1325.6" cy="24.6" r="1.9" fill="#e6e6e6"/><path d="M1316.9 27.3L1325.4 31.1 1322.2 32.5 1320.7 35.7z" fill="#e6e6e6"/></svg>
<svg class="ic" style="left:1335px;top:26.2px" width="8" height="6"><path d="M1 1l3 3 3-3" stroke="#e6e6e6" stroke-width="1.2" fill="none"/></svg>
<div class="btn hd" style="left:1352px;top:18.4px;width:38px;height:19.3px"></div>
<div class="a blue" style="left:1352px;top:18.8px;width:18.5px;height:18.5px;border-radius:4px 0 0 4px"></div>
<svg class="ic" style="left:1352px;top:18px" width="20" height="20" viewBox="1352 18 20 20"><path d="M1354 23.7A11.5 11.5 0 0 1 1365.6 35.2" fill="none" stroke="#fff" stroke-width="1.2"/><circle cx="1355.8" cy="32.8" r="1.5" fill="none" stroke="#fff" stroke-width="1"/><path d="M1356.9 31.7L1367.7 21.6M1363.8 21.4h4.1v4.1" fill="none" stroke="#fff" stroke-width="1.2"/></svg>
<svg class="ic" style="left:1377px;top:26.2px" width="8" height="6"><path d="M1 1l3 3 3-3" stroke="#e6e6e6" stroke-width="1.2" fill="none"/></svg>
<div class="btn hd" style="left:1397px;top:18.4px;width:38px;height:19.3px"></div>
<div class="a blue" style="left:1397px;top:18.8px;width:18.5px;height:18.5px;border-radius:4px 0 0 4px"></div>
<svg class="ic" style="left:1397px;top:18px" width="20" height="20" viewBox="1397 18 20 20"><circle cx="1408.6" cy="26.2" r="5.2" fill="#f0f0f0"/><circle cx="1404" cy="30.4" r="5" fill="#4772b3"/><path d="M1408.3 32.9A5 5 0 1 1 1401.4 26.1" fill="none" stroke="#f0f0f0" stroke-width="1.3"/><path d="M1403.5 25.5a5 5 0 0 1 5.4 5.8" fill="none" stroke="#f0f0f0" stroke-width="1" stroke-dasharray="1.5 1.2"/></svg>
<svg class="ic" style="left:1422px;top:26.2px" width="8" height="6"><path d="M1 1l3 3 3-3" stroke="#e6e6e6" stroke-width="1.2" fill="none"/></svg>
<div class="a" style="left:1442px;top:19px;width:18px;height:18px;background:rgba(62,62,62,.9);border-radius:4px"></div>
<svg class="ic" style="left:1443px;top:20px" width="16" height="16" viewBox="0 0 16 16"><rect x="2" y="5" width="9" height="9" fill="none" stroke="#5c5c5c" stroke-width="1.1"/><rect x="5" y="2" width="9" height="9" fill="none" stroke="#5c5c5c" stroke-width="1.1"/></svg>
<div class="a" style="left:1543px;top:19px;width:19.5px;height:18px;background:#282828;border-radius:0 4px 4px 0"></div>
<div class="a" style="left:1467px;top:19px;width:76px;height:18px;background:#545454;border-radius:4px 0 0 4px"></div>
<div class="a" style="left:1485.5px;top:19px;width:1px;height:18px;background:#444"></div><div class="a" style="left:1523.5px;top:19px;width:1px;height:18px;background:#444"></div>
<div class="a blue" style="left:1505px;top:19px;width:18.5px;height:18px"></div>
<svg class="ic" style="left:1468px;top:20px" width="16" height="16" viewBox="0 0 16 16"><circle cx="8" cy="8" r="6" fill="none" stroke="#e6e6e6" stroke-width="1"/><path d="M8 2v12M2.5 5.5h11M2.5 10.5h11" stroke="#e6e6e6" stroke-width="1"/></svg>
<svg class="ic" style="left:1487px;top:20px" width="16" height="16" viewBox="0 0 16 16"><circle cx="8" cy="8" r="6.2" fill="#c8c8c8"/></svg>
<svg class="ic" style="left:1506px;top:20px" width="16" height="16" viewBox="0 0 16 16"><circle cx="8" cy="8" r="6.2" fill="#fff"/><path d="M8 8V1.8A6.2 6.2 0 0 1 14.2 8zM8 8v6.2A6.2 6.2 0 0 1 1.8 8z" fill="#4772b3"/><circle cx="8" cy="8" r="5.7" fill="none" stroke="#fff" stroke-width="1"/></svg>
<svg class="ic" style="left:1525px;top:20px" width="16" height="16" viewBox="0 0 16 16"><circle cx="8" cy="8" r="6.2" fill="#5a5a5a" stroke="#e6e6e6" stroke-width="1"/><path d="M4.5 7a4 4 0 0 1 3-3" stroke="#d8d8d8" stroke-width="1.3" fill="none"/></svg>
<svg class="ic" style="left:1549px;top:26.2px" width="8" height="6"><path d="M1 1l3 3 3-3" stroke="#e6e6e6" stroke-width="1.2" fill="none"/></svg>
<!-- tool settings row -->
<svg class="ic" style="left:7px;top:49px" width="18" height="13" viewBox="0 0 18 13"><path d="M0 1h11v10.7H0z" fill="#e0964a"/><path d="M6.5 1.2l2.5 1.5 1.5 3-1 3.5-1.5 0 .5-3.5z" fill="#2a2a2a"/><path d="M12.5 2l-1.5 3 .3 1.5 4.5 3.3-3.8-2-1 .2" stroke="#e0964a" stroke-width="1.3" fill="#e0964a" stroke-linejoin="round"/></svg>
<svg class="ic" style="left:30px;top:51px" width="10" height="8"><path d="M.7 1h8.6L5 7z" fill="#e6e6e6"/></svg>
<div class="a" style="left:51px;top:46px;width:94px;height:18px;background:#545454;border-radius:4px"></div>
<div class="a blue" style="left:51px;top:46px;width:18px;height:18px;border-radius:4px 0 0 4px"></div>
<div class="a" style="left:69px;top:46px;width:1px;height:18px;background:#3d3d3d"></div>
<div class="a" style="left:88px;top:46px;width:1px;height:18px;background:#3d3d3d"></div>
<div class="a" style="left:107px;top:46px;width:1px;height:18px;background:#3d3d3d"></div>
<div class="a" style="left:126px;top:46px;width:1px;height:18px;background:#3d3d3d"></div>
<svg class="ic" style="left:52px;top:47px" width="16" height="17" viewBox="0 0 16 17"><rect x="1.5" y="2" width="13" height="13" fill="none" stroke="#fff" stroke-width="1.2" stroke-dasharray="2.6 1.7"/></svg>
<svg class="ic" style="left:71px;top:47px" width="16" height="17" viewBox="0 0 16 17"><path d="M6 2h9v8h-5v5H1V7h5z" fill="#c4c4c4"/></svg>
<svg class="ic" style="left:90px;top:47px" width="16" height="17" viewBox="0 0 16 17"><path d="M7 2h8v8h-4V6H7z" fill="#c4c4c4"/><rect x="1.5" y="7" width="8" height="8" fill="none" stroke="#c4c4c4" stroke-width="1" stroke-dasharray="2 1.5"/></svg>
<svg class="ic" style="left:109px;top:47px" width="16" height="17" viewBox="0 0 16 17"><path d="M6 2h9v9h-4V6H6zM1 7h4v5h5v4H1z" fill="#c4c4c4"/></svg>
<svg class="ic" style="left:128px;top:47px" width="16" height="17" viewBox="0 0 16 17"><rect x="5" y="5.5" width="6" height="6" fill="#c4c4c4"/><rect x="1.5" y="2" width="13" height="13" fill="none" stroke="#c4c4c4" stroke-width="1" stroke-dasharray="2.6 1.7"/></svg>
<!-- asset shelf header -->
<svg class="ic" style="left:482.5px;top:49px" width="18" height="13" viewBox="0 0 18 13"><path d="M0 1h11v10.7H0z" fill="#e0964a"/><path d="M6.5 1.2l2.5 1.5 1.5 3-1 3.5-1.5 0 .5-3.5z" fill="#2a2a2a"/><path d="M12.5 2l-1.5 3 .3 1.5 4.5 3.3-3.8-2-1 .2" stroke="#e0964a" stroke-width="1.3" fill="#e0964a" stroke-linejoin="round"/></svg>
<svg class="ic" style="left:505px;top:51px" width="10" height="8"><path d="M1 1h8L5 7z" fill="#e6e6e6"/></svg>
<div class="a" style="left:526px;top:46px;width:98px;height:18px;background:#545454;border-radius:4px"></div>
<div class="a blue" style="left:565px;top:46px;width:19px;height:18px"></div>
<div class="a" style="left:545px;top:46px;width:1px;height:18px;background:#444"></div>
<div class="a" style="left:604px;top:46px;width:1px;height:18px;background:#444"></div>
<svg class="ic" style="left:528px;top:47px" width="16" height="17" viewBox="0 0 16 17"><path d="M3 2h11v3H3zM4 5h9v8H4zM1.5 4v11h9" stroke="#e6e6e6" stroke-width="1.1" fill="none"/><rect x="3" y="2" width="11" height="3" fill="#e6e6e6"/><rect x="6.5" y="7" width="4" height="1.8" fill="#e6e6e6"/></svg>
<svg class="ic" style="left:547px;top:47px" width="16" height="17" viewBox="0 0 16 17"><path d="M1.5 5.5h9.5v9.5H1.5zM1.5 5.5L5 2h9.5L11 5.5M14.5 2v9.5L11 15" stroke="#e6e6e6" stroke-width="1.1" fill="none" stroke-linejoin="round"/></svg>
<svg class="ic" style="left:566px;top:47px" width="17" height="17" viewBox="0 0 17 17"><circle cx="8.5" cy="8.5" r="6.5" fill="#fff"/><path d="M8.5 8.5V2A6.5 6.5 0 0 0 2 8.5zM8.5 8.5V15A6.5 6.5 0 0 0 15 8.5z" fill="#4772b3"/><circle cx="8.5" cy="8.5" r="6.5" fill="none" stroke="#fff" stroke-width="1.2"/></svg>
<svg class="ic" style="left:586px;top:47px" width="17" height="17" viewBox="0 0 17 17"><path d="M5 2l4 10H1z" fill="#d0d0d0"/><circle cx="13.5" cy="4" r="1.8" fill="#e6e6e6"/><circle cx="11.5" cy="11.5" r="3.3" fill="none" stroke="#e6e6e6" stroke-width="1.1"/></svg>
<svg class="ic" style="left:606px;top:47px" width="17" height="17" viewBox="0 0 17 17"><circle cx="8" cy="9" r="5.8" fill="none" stroke="#e6e6e6" stroke-width="1.1"/><path d="M5 6c2-1 3 0 3.5 1.5S7 10 6 10.5 4 8 5 6zM9 11c1-1 3-1 3 0s-1 2.5-2 2.5-1.5-1.5-1-2.5z" fill="#e6e6e6"/><path d="M2 15L15 2" stroke="#e6e6e6" stroke-width="1"/></svg>
<div class="btn" style="left:630.5px;top:45.3px;width:38px;height:19.3px"></div>
<div class="t" style="left:638px;top:48px">All</div>
<svg class="ic" style="left:658px;top:53.2px" width="8" height="6"><path d="M1 1l3 3 3-3" stroke="#e6e6e6" stroke-width="1.2" fill="none"/></svg>
<div class="fld" style="left:674.5px;top:45.3px;width:205px;height:19.3px"></div>
<svg class="ic" style="left:678px;top:47px" width="16" height="16" viewBox="0 0 16 16"><circle cx="6.5" cy="6.5" r="4.3" fill="none" stroke="#e6e6e6" stroke-width="1.2"/><path d="M9.7 9.7L14 14" stroke="#e6e6e6" stroke-width="1.4"/></svg>
<div class="t" style="left:700px;top:48px;color:#7a7a7a;letter-spacing:-0.33px">Search</div>
<div class="a blue" style="left:885px;top:46px;width:18px;height:18px;border-radius:4px"></div>
<svg class="ic" style="left:886px;top:47px" width="16" height="17" viewBox="0 0 16 17"><path d="M1.5 8.5C4 3.5 12 3.5 14.5 8.5 12 13.5 4 13.5 1.5 8.5z" fill="none" stroke="#fff" stroke-width="1.4"/><circle cx="8" cy="8.5" r="2.2" fill="#fff"/></svg>
<div class="btn" style="left:908.5px;top:45.3px;width:33px;height:19.3px"></div>
<svg class="ic" style="left:911px;top:47px" width="16" height="17" viewBox="0 0 16 17"><path d="M2 2.5h12L9.5 8.5v6L6.5 12.5v-4z" fill="none" stroke="#e6e6e6" stroke-width="1.2" stroke-linejoin="round"/></svg>
<svg class="ic" style="left:930px;top:53.2px" width="8" height="6"><path d="M1 1l3 3 3-3" stroke="#e6e6e6" stroke-width="1.2" fill="none"/></svg>
<div class="a" style="left:947px;top:46px;width:38px;height:18px;background:#3b3b3b;border-radius:4px"></div>
<div class="a" style="left:1028px;top:46px;width:38px;height:18px;background:#3b3b3b;border-radius:4px"></div>
<svg class="ic" style="left:947px;top:46px" width="38" height="19" viewBox="0 0 38 19"><path d="M6 5v9M13 5v9l-6-4.5zM31 5v9l-6-4.5z" fill="#555" stroke="#555" stroke-width="1"/></svg>
<svg class="ic" style="left:1028px;top:46px" width="38" height="19" viewBox="0 0 38 19"><path d="M7 5v9l6-4.5zM25 5v9l6-4.5zM32.5 5v9" fill="#555" stroke="#555" stroke-width="1"/></svg>
<div class="t" style="left:987px;top:48px;letter-spacing:-0.29px">Page 1</div>
<!-- options -->
<div class="btn" style="left:1496.5px;top:45.3px;width:66.5px;height:19.3px"></div>
<div class="t" style="left:1504px;top:48px;letter-spacing:0.28px">Options</div>
<svg class="ic" style="left:1552px;top:53.2px" width="8" height="6"><path d="M1 1l3 3 3-3" stroke="#e6e6e6" stroke-width="1.2" fill="none"/></svg>
<!-- toolbar -->
<div class="a" style="left:6px;top:77px;width:38px;height:68px;background:rgba(38,38,38,.95);border-radius:5px"></div>
<div class="a blue" style="left:6px;top:77px;width:38px;height:33.5px;border-radius:5px 5px 0 0"></div>
<div class="a" style="left:6px;top:152px;width:38px;height:137.5px;background:rgba(38,38,38,.95);border-radius:5px"></div>
<div class="a" style="left:6px;top:185.5px;width:38px;height:1px;background:#3a3a3a"></div>
<div class="a" style="left:6px;top:220px;width:38px;height:1px;background:#3a3a3a"></div>
<div class="a" style="left:6px;top:254.5px;width:38px;height:1px;background:#3a3a3a"></div>
<div class="a" style="left:6px;top:297px;width:38px;height:67.5px;background:rgba(38,38,38,.95);border-radius:5px"></div>
<div class="a" style="left:6px;top:330px;width:38px;height:1px;background:#3a3a3a"></div>
<div class="a" style="left:6px;top:372px;width:38px;height:33px;background:rgba(38,38,38,.95);border-radius:5px"></div>
<div class="a" style="left:6px;top:412px;width:38px;height:33px;background:rgba(38,38,38,.95);border-radius:5px"></div>
<div class="a" style="left:6px;top:452px;width:38px;height:33px;background:rgba(38,38,38,.95);border-radius:5px"></div>
<!-- select box -->
<svg class="ic" style="left:11px;top:80px" width="28" height="28" viewBox="0 0 28 28"><rect x="3" y="3" width="22" height="22" fill="none" stroke="#f3a033" stroke-width="1.3" stroke-dasharray="5 2.3"/><path d="M10 8l9 6.5-4.2 1L13 20z" fill="#e8e8e8"/><path d="M27 24v3h-3z" fill="#b0b0b0"/></svg>
<!-- cursor -->
<svg class="ic" style="left:11px;top:114px" width="28" height="28" viewBox="0 0 28 28"><circle cx="14" cy="14" r="11" fill="none" stroke="#e6e6e6" stroke-width="1.5"/><circle cx="14" cy="14" r="11" fill="none" stroke="#d0453a" stroke-width="1.5" stroke-dasharray="4.3 4.34" stroke-dashoffset="2.1"/><path d="M14 5v6M14 17v6M5 14h6M17 14h6" stroke="#9a9a9a" stroke-width="1.3"/></svg>
<!-- move -->
<svg class="ic" style="left:11px;top:154px" width="28" height="28" viewBox="0 0 28 28"><path d="M14 1.5l3.3 4.5h-6.6zM14 26.5l3.3-4.5h-6.6zM1.5 14l4.5-3.3v6.6zM26.5 14l-4.5-3.3v6.6z" fill="#e6e6e6"/><path d="M14 7v4M14 17v4M7 14h4M17 14h4" stroke="#e6e6e6" stroke-width="1.3" stroke-dasharray="2 1.5"/></svg>
<!-- rotate -->
<svg class="ic" style="left:11px;top:189px" width="28" height="28" viewBox="0 0 28 28"><path d="M5.5 10.5A9.5 9.5 0 0 1 22 9M22.5 17.5A9.5 9.5 0 0 1 6 19" fill="none" stroke="#e6e6e6" stroke-width="1.3"/><path d="M1.5 12.5h7L5 17.5zM26.5 15.5h-7L23 10.5z" fill="#e6e6e6"/><path d="M14 10.5l3.5 3.5-3.5 3.5-3.5-3.5z" fill="#c8c8c8"/></svg>
<!-- scale -->
<svg class="ic" style="left:11px;top:224px" width="28" height="28" viewBox="0 0 28 28"><rect x="5" y="13.5" width="9.5" height="9.5" fill="#e6e6e6"/><path d="M8 10.5V5h15v15h-5.5" fill="none" stroke="#e6e6e6" stroke-width="1.3"/><path d="M15 13l5-5M16.5 7.5h4v4" fill="none" stroke="#e6e6e6" stroke-width="1.3"/></svg>
<svg class="ic" style="left:38px;top:248.5px" width="4" height="4"><path d="M4 0v4H0z" fill="#9a9a9a"/></svg>
<!-- transform -->
<svg class="ic" style="left:11px;top:258px" width="28" height="28" viewBox="0 0 28 28"><circle cx="14" cy="14" r="9.5" fill="none" stroke="#e6e6e6" stroke-width="1.3"/><rect x="9.5" y="9.5" width="9" height="9" fill="#e6e6e6" stroke="#262626" stroke-width="1.5"/><path d="M14 1l3 4h-6zM14 27l3-4h-6zM1 14l4-3v6zM27 14l-4-3v6z" fill="#e6e6e6" stroke="#262626" stroke-width=".8"/></svg>
<!-- annotate -->
<svg class="ic" style="left:11px;top:300px" width="28" height="28" viewBox="0 0 28 28"><path d="M3 17.5l2-5L17 3.5l3.5 4.5L8.5 17z" fill="#e6e6e6"/><path d="M18.5 2.5l2-1.5 3.5 4.5-2 1.5z" fill="#e6e6e6"/><path d="M3 19c2 3 5 4 8 1.5s6-4 8-1 3 4 5.5 4" fill="none" stroke="#e6e6e6" stroke-width="1.2"/></svg>
<svg class="ic" style="left:38px;top:324px" width="4" height="4"><path d="M4 0v4H0z" fill="#9a9a9a"/></svg>
<!-- measure -->
<svg class="ic" style="left:11px;top:334px" width="28" height="28" viewBox="0 0 28 28"><path d="M7.5 13A13 13 0 0 1 20.5 24.5H7.5z" fill="#aab4b0"/><path d="M4.5 2h3.5v21.5h17v3H4.5z" fill="#e6e6e6"/><path d="M4.5 5h2M4.5 8h2M4.5 11h2M4.5 14h2M4.5 17h2M4.5 20h2M11 24.5v2M14 24.5v2M17 24.5v2M20 24.5v2M23 24.5v2" stroke="#262626" stroke-width=".9"/></svg>
<!-- add cube -->
<svg class="ic" style="left:11px;top:374px" width="28" height="28" viewBox="0 0 28 28"><path d="M7 11.5h14.5v14.5H7zM7 11.5l5.5-4.5H26.5l-5 4.5M26.5 7v14l-5 5" fill="none" stroke="#e6e6e6" stroke-width="1.2" stroke-linejoin="round"/><path d="M4.5 1v8M.5 5h8" stroke="#e6e6e6" stroke-width="1.4"/></svg>
<svg class="ic" style="left:38px;top:399px" width="4" height="4"><path d="M4 0v4H0z" fill="#9a9a9a"/></svg>
<!-- inset -->
<svg class="ic" style="left:11px;top:414px" width="28" height="28" viewBox="0 0 28 28"><rect x="4" y="4" width="20" height="20" fill="none" stroke="#e6e6e6" stroke-width="1.6"/><rect x="7.5" y="7.5" width="13" height="13" fill="#e6e6e6"/><path d="M8.5 8.5h11L8.5 19.5z" fill="#262626"/><path d="M8.5 8.5l11 11" stroke="#262626" stroke-width="1"/></svg>
<!-- bevel -->
<svg class="ic" style="left:11px;top:454px" width="28" height="28" viewBox="0 0 28 28"><rect x="4" y="4" width="20" height="20" fill="none" stroke="#e6e6e6" stroke-width="1.6"/><path d="M9 23v-5a8 8 0 0 1 8-8h5v4.5h-4.5a4 4 0 0 0-4 4V23z" fill="#e6e6e6"/></svg>
<!-- viewport text -->
<div class="t sh" style="left:62px;top:77px;color:#fff;-webkit-text-stroke:.25px #fff">User Perspective</div>
<div class="t sh" style="left:62px;top:95px;color:#fff;-webkit-text-stroke:.25px #fff;letter-spacing:0.28px">(1) Collection | Cube</div>
<!-- gizmo -->
<svg style="left:1470px;top:70px" width="100" height="100" viewBox="1470 70 100 100">
<circle cx="1507" cy="105" r="6.8" fill="#7a2a3a" fill-opacity=".35" stroke="#a8394d" stroke-width="1.3"/>
<circle cx="1491" cy="123.8" r="7.6" fill="#5d7f2a" stroke="#7fb31c" stroke-width="1.3"/>
<circle cx="1520" cy="146.8" r="7.2" fill="#3f4f72" stroke="#3f76c4" stroke-width="1.3"/>
<path d="M1520 118.3V96" stroke="#3a8fd6" stroke-width="2.2"/>
<path d="M1520 118.3L1542 113.5" stroke="#7fb31c" stroke-width="2.2"/>
<path d="M1520 118.3L1528 126" stroke="#d8405a" stroke-width="2.2"/>
<circle cx="1520" cy="89" r="8.3" fill="#3a8fd6"/>
<circle cx="1549" cy="112" r="8.3" fill="#7fb31c"/>
<circle cx="1532.5" cy="130.7" r="8.5" fill="#c8394f"/>
<text x="1520" y="93" font-size="11" text-anchor="middle" fill="#181818" font-family="Liberation Sans, sans-serif">Z</text>
<text x="1549" y="116" font-size="11" text-anchor="middle" fill="#181818" font-family="Liberation Sans, sans-serif">Y</text>
<text x="1532.5" y="134.7" font-size="11" text-anchor="middle" fill="#181818" font-family="Liberation Sans, sans-serif">X</text>
</svg>
<!-- sidebar toggle -->
<div class="a" style="left:1561px;top:90px;width:11px;height:18px;background:rgba(44,44,44,.9);border-radius:4px 0 0 4px"></div>
<svg class="ic" style="left:1563px;top:94px" width="7" height="10"><path d="M5.5 1L1.5 5l4 4" stroke="#bbb" stroke-width="1.2" fill="none"/></svg>
<!-- nav buttons -->
<svg style="left:1530px;top:155px" width="40" height="125" viewBox="1530 155 40 125">
<g fill="#2a2a2a" fill-opacity=".85"><circle cx="1547.8" cy="172.3" r="13.3"/><circle cx="1547.8" cy="202.9" r="13.3"/><circle cx="1547.8" cy="233.4" r="13.3"/><circle cx="1547.8" cy="263.9" r="13.3"/></g>
<g fill="none" stroke="#e6e6e6" stroke-width="1.4">
<circle cx="1546" cy="170.5" r="5.2" fill="#e6e6e6"/><path d="M1550 174.5l5 5" stroke-width="2"/>
<path d="M1543.3 170.5h5.4M1546 167.8v5.4" stroke="#262626" stroke-width="1.1"/>
</g>
<path d="M1541.5 203c-1-2-2.5-4 -1.5-4.5s2 .5 3 2l.3-5.5c0-1.3 1.7-1.3 1.8 0l.4 3.5.3-5c.1-1.3 1.8-1.3 1.9 0l.2 5 .8-4.3c.2-1.2 1.8-1 1.8.2l-.3 4.6 1-3c.4-1.1 1.8-.7 1.6.5l-1 5.5c-.3 2-1 4-2.5 5.5h-5c-1-.5-2-2.5-2.8-4.5z" fill="#e6e6e6"/>
<g fill="none" stroke="#e6e6e6" stroke-width="1.2">
<path d="M1541 228.5a3 3 0 0 1 3-3h6a3 3 0 0 1 0 6h-6a3 3 0 0 1-3-3z"/><circle cx="1550" cy="228.5" r=".8" fill="#e6e6e6"/><path d="M1543 228.5h3M1544.5 227v3" stroke-width=".9"/>
<rect x="1543.5" y="234.5" width="7" height="5.5"/><path d="M1555 234l-3 3.2 3 3.2z" fill="#e6e6e6" stroke-width=".8"/><path d="M1541 237h2.5" />
</g>
<g fill="none" stroke="#e6e6e6" stroke-width="1.2"><path d="M1543 256h10l3 15h-16zM1546.3 256l-1.3 15M1549.7 256l1.3 15M1542 261h12M1541 266h14"/></g>
</svg>
<!-- asset shelf popup -->
<div class="a" style="left:184.4px;top:70px;width:1199.3px;height:151.7px;background:#202020;border-radius:3px"></div>
<div class="a" style="left:188.3px;top:70.5px;width:1191.7px;height:147.5px;background:#1a1a1a;border-radius:1px"></div>
<div class="a" style="left:192px;top:74px;width:110.5px;height:110px;background:#222"></div>
<div class="a" style="left:306px;top:74px;width:110.5px;height:110px;background:#222"></div>
<div class="a" style="left:420px;top:74px;width:110.5px;height:110px;background:#222"></div>
<div class="a" style="left:534px;top:74px;width:110.5px;height:110px;background:#222"></div>
<div class="a" style="left:196px;top:78px;width:102.5px;height:102.5px;background:#2b2b2b"></div>
<div class="a" style="left:310px;top:78px;width:102.5px;height:102.5px;background:#2b2b2b"></div>
<div class="a" style="left:424px;top:78px;width:102.5px;height:102.5px;background:#2b2b2b"></div>
<div class="a" style="left:538px;top:78px;width:102.5px;height:102.5px;background:#2b2b2b"></div>
<svg style="left:190px;top:74px" width="460" height="112" viewBox="190 74 460 112">
<defs>
<linearGradient id="sw" x1="0" y1="89" x2="0" y2="168" gradientUnits="userSpaceOnUse"><stop offset="0" stop-color="#cab297"/><stop offset=".14" stop-color="#d1b99d"/><stop offset=".33" stop-color="#cfb699"/><stop offset=".5" stop-color="#c5aa8d"/><stop offset=".65" stop-color="#a58c73"/><stop offset=".73" stop-color="#967d64"/><stop offset=".81" stop-color="#7a6652"/><stop offset=".9" stop-color="#64523c"/><stop offset="1" stop-color="#504230"/></linearGradient>
<radialGradient id="swv" cx="247" cy="124" r="41" gradientUnits="userSpaceOnUse"><stop offset=".75" stop-color="#5a4632" stop-opacity="0"/><stop offset="1" stop-color="#5a4632" stop-opacity=".3"/></radialGradient>
<linearGradient id="sc" x1="0" y1="84" x2="0" y2="174" gradientUnits="userSpaceOnUse"><stop offset="0" stop-color="#c4c8c6"/><stop offset=".25" stop-color="#cccecc"/><stop offset=".45" stop-color="#b9bdbb"/><stop offset=".54" stop-color="#b0b5b2"/><stop offset=".6" stop-color="#c0beb6"/><stop offset=".7" stop-color="#b0b0ac"/><stop offset=".82" stop-color="#858585"/><stop offset=".93" stop-color="#5c5c5c"/><stop offset="1" stop-color="#484848"/></linearGradient>
<radialGradient id="scv" cx="361" cy="118" r="48" gradientUnits="userSpaceOnUse"><stop offset=".65" stop-color="#444" stop-opacity="0"/><stop offset="1" stop-color="#444" stop-opacity=".4"/></radialGradient>
<radialGradient id="sch" cx="340" cy="108" r="26" gradientUnits="userSpaceOnUse"><stop offset="0" stop-color="#fff" stop-opacity=".25"/><stop offset="1" stop-color="#fff" stop-opacity="0"/></radialGradient>
<linearGradient id="sf" x1="0" y1="84" x2="0" y2="174" gradientUnits="userSpaceOnUse"><stop offset="0" stop-color="#a08540"/><stop offset=".25" stop-color="#a88c46"/><stop offset=".45" stop-color="#a78b46"/><stop offset=".55" stop-color="#9a8240"/><stop offset=".63" stop-color="#826d40"/><stop offset=".72" stop-color="#705d39"/><stop offset=".8" stop-color="#5b4d2f"/><stop offset=".9" stop-color="#3b3525"/><stop offset="1" stop-color="#22211e"/></linearGradient>
<radialGradient id="sfv" cx="475" cy="120" r="48" gradientUnits="userSpaceOnUse"><stop offset=".7" stop-color="#4a3a18" stop-opacity="0"/><stop offset="1" stop-color="#4a3a18" stop-opacity=".4"/></radialGradient>
<radialGradient id="sg" cx="589" cy="129" r="44" gradientUnits="userSpaceOnUse"><stop offset="0" stop-color="#303030"/><stop offset=".6" stop-color="#383838"/><stop offset=".9" stop-color="#454545"/><stop offset="1" stop-color="#5a5a5a"/></radialGradient>
<filter id="nz" x="0" y="0" width="1" height="1"><feTurbulence type="fractalNoise" baseFrequency="0.9" numOctaves="2" seed="3" result="n"/><feColorMatrix in="n" type="matrix" values="0 0 0 0 0.25  0 0 0 0 0.2  0 0 0 0 0.05  1.2 0 0 0 -0.52"/><feComposite in2="SourceGraphic" operator="in"/></filter>
<filter id="nz2" x="0" y="0" width="1" height="1"><feTurbulence type="fractalNoise" baseFrequency="0.12" numOctaves="3" seed="8" result="n"/><feColorMatrix in="n" type="matrix" values="0 0 0 0 0.75  0 0 0 0 0.75  0 0 0 0 0.75  2.2 0 0 0 -1.05"/><feComposite in2="SourceGraphic" operator="in"/></filter>
<clipPath id="cc"><circle cx="361.2" cy="128.8" r="44.5"/></clipPath>
<filter id="bl" x="-.2" y="-.2" width="1.4" height="1.4"><feGaussianBlur stdDeviation="2.2"/></filter>
<clipPath id="cw"><circle cx="247" cy="128.4" r="38.9"/></clipPath>
<clipPath id="cg"><circle cx="589" cy="129" r="43.6"/></clipPath>
</defs>
<circle cx="247" cy="128.4" r="38.9" fill="url(#sw)"/>
<g clip-path="url(#cw)" fill="none" stroke="#9c7c58" stroke-opacity=".5" stroke-width=".8">
<path d="M205 98q42-8 84 0M205 104q42-7 84 0M205 110.5q42-6 84 0M205 117q42-4 84 0M205 123.5q42-2 84 0M205 130h84M205 136.5q42 2 84 0M205 143q42 4 84 0M205 149.5q42 6 84 0M205 156q42 8 84 0M205 162q42 9 84 0M232 105v6M250 130v7M268 111v6M226 137v6M262 143v7M240 117v6M272 123v7M222 123v7"/>
</g>
<g clip-path="url(#cw)"><path d="M205 92q42 -8 84 0v6q-42 8 -84 0z" fill="#000" fill-opacity="0.06"/><path d="M205 104q42 -7 84 0v6.5q-42 6 -84 0z" fill="#fff" fill-opacity="0.06"/><path d="M205 117q42 -4 84 0v6.5q-42 3 -84 0z" fill="#000" fill-opacity="0.05"/><path d="M205 130q42 0 84 0v6.5q-42 -1 -84 0z" fill="#fff" fill-opacity="0.05"/><path d="M205 143q42 4 84 0v6.5q-42 -5 -84 0z" fill="#000" fill-opacity="0.06"/><path d="M205 156q42 8 84 0v6q-42 -9 -84 0z" fill="#fff" fill-opacity="0.04"/></g>
<circle cx="247" cy="128.4" r="38.9" fill="url(#swv)"/>
<circle cx="361.2" cy="128.8" r="44.5" fill="#cbcecc"/>
<g clip-path="url(#cc)"><g filter="url(#bl)">
<ellipse cx="361.2" cy="181" rx="62" ry="50" fill="#a9aeab"/>
<ellipse cx="361.2" cy="186" rx="62" ry="50" fill="#c3c2ba"/>
<ellipse cx="361.2" cy="197" rx="62" ry="50" fill="#a6a6a2"/>
<ellipse cx="361.2" cy="206" rx="62" ry="50" fill="#7c7c7b"/>
<ellipse cx="361.2" cy="214" rx="62" ry="50" fill="#585858"/>
<ellipse cx="361.2" cy="221" rx="62" ry="50" fill="#444"/>
</g></g>
<circle cx="361.2" cy="128.8" r="44.5" fill="url(#sch)"/>
<circle cx="361.2" cy="128.8" r="44.5" fill="url(#scv)"/>
<circle cx="475.2" cy="128.9" r="44.4" fill="url(#sf)"/>
<circle cx="475.2" cy="128.9" r="44.4" fill="#000" filter="url(#nz)"/>
<circle cx="475.2" cy="128.9" r="44.4" fill="url(#sfv)"/>
<circle cx="589" cy="129" r="43.6" fill="url(#sg)"/>
<g clip-path="url(#cg)">
<circle cx="589" cy="129" r="43.6" fill="#fff" filter="url(#nz2)" opacity=".2"/>
<path d="M556.6 110l18.8 1.9-2.4 20.1-17-.7z" fill="#7a7a7a"/>
<path d="M603.7 111.9l9.3-.7 1.3 10.8-7.5.5z" fill="#d4d4d4"/>
<path d="M598 128.2l10.7-1.2-1.9 12.5-10.6-1.3z" fill="#6c6c6c"/>
<path d="M578.6 159.6l12.5-1.3.7 5-12 .7z" fill="#dcdcdc"/>
<path d="M578 86.5q11-2.5 22 0" stroke="#cfcfcf" stroke-width="1.5" fill="none"/>
<circle cx="589" cy="129" r="42.8" fill="none" stroke="#808080" stroke-width="1.2" stroke-opacity=".45"/>
</g>
</svg>
<div class="t sh" style="left:196px;top:192px;color:#fff;-webkit-text-stroke:.4px #fff;letter-spacing:.2px">Wood Floor Mate...</div>
<div class="t sh" style="left:310px;top:192px;color:#fff;-webkit-text-stroke:.4px #fff;letter-spacing:.15px">Concrete 1</div>
<div class="t sh" style="left:424px;top:192px;color:#fff;-webkit-text-stroke:.4px #fff;letter-spacing:.5px">Floor</div>
<div class="t sh" style="left:538px;top:193px;color:#fff;-webkit-text-stroke:.4px #fff;letter-spacing:.03px">Dirty Glass</div>
<div class="a" style="left:1362px;top:74px;width:18px;height:18px;background:#4b402d;border-radius:4px"></div>
<svg class="ic" style="left:1366px;top:78px" width="10" height="10"><path d="M2.3 2.3l5.4 5.4M7.7 2.3l-5.4 5.4" stroke="#fff" stroke-width="1.5"/></svg>
<!-- OUTLINER -->
<div class="a" style="left:1574px;top:16px;width:340px;height:176px;background:#282828;border:1px solid #333;border-radius:5px 0 0 5px;overflow:hidden">
<div class="a" style="left:0px;top:46px;width:340px;height:20px;background:#2b2b2b"></div>
<div class="a" style="left:0px;top:86px;width:340px;height:20px;background:#2b2b2b"></div>
<div class="a" style="left:0px;top:126px;width:340px;height:20px;background:#2b2b2b"></div>
<div class="a" style="left:0px;top:166px;width:340px;height:20px;background:#2b2b2b"></div>
<div class="a" style="left:2.90091px;top:87px;width:340px;height:18px;background:#334d80;border:1px solid #4d74b8;border-radius:3px 0 0 3px"></div>
</div>
<div class="btn" style="left:1583px;top:18px;width:32px;height:20px"></div>
<svg class="ic" style="left:1586px;top:20px" width="16" height="16" viewBox="0 0 16 16"><rect x="1" y="1" width="5" height="2.6" fill="#e6e6e6"/><rect x="8" y="6.5" width="7" height="2.8" fill="#e6e6e6"/><rect x="8" y="12" width="7" height="2.8" fill="#e6e6e6"/><path d="M3.5 4v9.5h3.5M3.5 8h3.5" stroke="#c8b8a8" stroke-width="1" fill="none"/></svg>
<svg class="ic" style="left:1604px;top:26.2px" width="8" height="8"><path d="M1 1l3.5 3 3.5-3" stroke="#e6e6e6" stroke-width="1.2" fill="none"/></svg>
<div class="btn" style="left:1620px;top:18px;width:32px;height:20px"></div>
<svg class="ic" style="left:1623px;top:20px" width="17" height="16" viewBox="0 0 17 16"><path d="M1.5 5v9.5h10M3.5 3.5v9h10" stroke="#b8b8b8" stroke-width="1" fill="none"/><rect x="6" y="1" width="9.5" height="9.5" fill="none" stroke="#e6e6e6" stroke-width="1.2"/><path d="M7 9.5l3.5-6 2 3.5 1-1 1 3.5z" fill="#e6e6e6"/><circle cx="13" cy="3.5" r="1" fill="#e6e6e6"/></svg>
<svg class="ic" style="left:1641px;top:26.2px" width="8" height="8"><path d="M1 1l3.5 3 3.5-3" stroke="#e6e6e6" stroke-width="1.2" fill="none"/></svg>
<div class="fld" style="left:1673px;top:18px;width:120px;height:20px"></div>
<svg class="ic" style="left:1677px;top:20px" width="16" height="16" viewBox="0 0 16 16"><circle cx="6.5" cy="6.5" r="4.3" fill="none" stroke="#e6e6e6" stroke-width="1.2"/><path d="M9.7 9.7L14 14" stroke="#e6e6e6" stroke-width="1.4"/></svg>
<div class="t" style="left:1699px;top:21px;color:#7a7a7a;letter-spacing:-0.33px">Search</div>
<div class="btn" style="left:1848px;top:18px;width:32px;height:20px"></div>
<svg class="ic" style="left:1850px;top:20px" width="16" height="17" viewBox="0 0 16 17"><path d="M2 2h12L9.5 8v6.5L6.5 12.5V8z" fill="none" stroke="#e6e6e6" stroke-width="1.2" stroke-linejoin="round"/></svg>
<svg class="ic" style="left:1869px;top:26.2px" width="8" height="8"><path d="M1 1l3.5 3 3.5-3" stroke="#e6e6e6" stroke-width="1.2" fill="none"/></svg>
<div class="a" style="left:1885.8px;top:18.5px;width:18.2px;height:19px;background:#545454;border-radius:4px"></div>
<svg class="ic" style="left:1887px;top:20px" width="17" height="17" viewBox="0 0 17 17"><path d="M1.5 4h6M1.5 4v3M1.5 7h5.5M2.5 7v8h9V9" fill="none" stroke="#b4b6b4" stroke-width="1.1"/><path d="M5 10.3h3.5" stroke="#b4b6b4" stroke-width="1.4"/><circle cx="11.5" cy="4.7" r="3.6" fill="#fff"/><path d="M11.5 2.5v4.4M9.3 4.7h4.4" stroke="#444" stroke-width="1.1"/></svg>
<svg class="ic" style="left:1598px;top:47px;opacity:1" width="14" height="13" viewBox="0 0 14 13"><rect x=".5" y=".5" width="13" height="3.2" fill="#dcdcdc"/><path d="M1.5 4.5h11V12.5h-11z" fill="#dcdcdc"/><rect x="4.5" y="6" width="5" height="1.8" fill="#282828"/></svg>
<div class="t" style="left:1619.5px;top:46.5px;color:#c9c9c9;letter-spacing:0.11px">Scene Collection</div>
<svg class="ic" style="left:1600px;top:71px" width="11" height="7"><path d="M1 1l4.5 4.5L10 1" stroke="#c8c8c8" stroke-width="1.2" fill="none"/></svg>
<div class="a" style="left:1615.5px;top:64.5px;width:19px;height:17px;background:#4a4a4a;border:1px solid #6a6a6a;border-radius:4px"></div>
<svg class="ic" style="left:1618px;top:67px;opacity:1" width="14" height="13" viewBox="0 0 14 13"><rect x=".5" y=".5" width="13" height="3.2" fill="#e6e6e6"/><path d="M1.5 4.5h11V12.5h-11z" fill="#e6e6e6"/><rect x="4.5" y="6" width="5" height="1.8" fill="#282828"/></svg>
<div class="t" style="left:1639.5px;top:66.5px;color:#f0f0f0;letter-spacing:0.28px">Collection</div>
<div class="a" style="left:1604px;top:88px;width:1px;height:50px;background:#4d4d4d"></div>
<div class="a" style="left:1604px;top:169px;width:1px;height:24px;background:#454545"></div>
<svg class="ic" style="left:1622px;top:87.5px" width="7" height="12"><path d="M1 1l4.5 5-4.5 5" stroke="#c8c8c8" stroke-width="1.2" fill="none"/></svg>
<svg class="ic" style="left:1637px;top:85px" width="16" height="16" viewBox="0 0 16 16"><circle cx="4" cy="4.5" r="3" fill="#dc9553"/><circle cx="10.5" cy="3.8" r="3.6" fill="#dc9553"/><rect x="2.5" y="8" width="9" height="6" rx="1" fill="#dc9553"/><path d="M12 11l3.5-2.5v5.5z" fill="#dc9553"/><path d="M.5 10l2 1v1l-2 1z" fill="#dc9553"/><circle cx="4" cy="4.5" r=".9" fill="#282828"/><circle cx="10.5" cy="3.8" r="1" fill="#282828"/></svg>
<div class="t" style="left:1659.5px;top:86.5px;color:#d4d4d4;letter-spacing:-0.22px">Camera</div>
<div class="a" style="left:1719px;top:84.5px;width:20px;height:17.5px;background:#4a4a4a;border:1px solid #666;border-radius:4px"></div>
<svg class="ic" style="left:1721px;top:85.5px" width="16" height="16" viewBox="0 0 16 16"><g fill="none" stroke="#1fb7a6" stroke-width="1"><path d="M1.5 5.5a2.5 2.5 0 0 1 4-2 4 4 0 0 1 7.5 2 3 3 0 0 1-3 3H4a2.5 2.5 0 0 1-2.5-3z"/><rect x="5" y="10" width="6" height="4.5" rx=".8"/><path d="M11.5 12.2l3-2v4.5zM2 12.2h3"/></g><circle cx="4" cy="5.5" r=".7" fill="#1fb7a6"/><path d="M9.5 3.5v3M8 5h3" stroke="#1fb7a6" stroke-width=".9"/></svg>
<svg class="ic" style="left:1622px;top:107.5px" width="7" height="12"><path d="M1 1l4.5 5-4.5 5" stroke="#dcdcdc" stroke-width="1.2" fill="none"/></svg>
<div class="a" style="left:1635.5px;top:104.5px;width:19.5px;height:17.5px;background:#5677b0;border:1px solid #7690c0;border-radius:4px"></div>
<svg class="ic" style="left:1637px;top:105px" width="16" height="16" viewBox="0 0 16 16"><path d="M.8 1.5h14.4L8 15.2zM5.3 4.6h5.4L8 9.6z" fill="#dd9650" fill-rule="evenodd"/></svg>
<div class="t" style="left:1659.5px;top:106.5px;color:#f3a033;letter-spacing:0.3px">Cube</div>
<svg class="ic" style="left:1709px;top:105px" width="16" height="16" viewBox="0 0 16 16"><path d="M2.5 2.5h11L8 13z" fill="none" stroke="#1fb7a6" stroke-width="1.2"/><g fill="#334d80" stroke="#1fb7a6" stroke-width="1"><rect x="1" y="1" width="3" height="3"/><rect x="12" y="1" width="3" height="3"/><rect x="6.5" y="11.5" width="3" height="3"/></g></svg>
<svg class="ic" style="left:1622px;top:127.5px" width="7" height="12"><path d="M1 1l4.5 5-4.5 5" stroke="#c8c8c8" stroke-width="1.2" fill="none"/></svg>
<svg class="ic" style="left:1637px;top:124.5px" width="16" height="17" viewBox="0 0 16 17"><path d="M8 .8a5.8 5.8 0 0 1 3.5 10.4v1.3h-7v-1.3A5.8 5.8 0 0 1 8 .8z" fill="#dc9553"/><path d="M5 13.5h6M5.5 15h5M7 16.5h2" stroke="#dc9553" stroke-width="1"/><path d="M5.5 7h5M6.5 7v3M9.5 7v3" stroke="#282828" stroke-width="1" fill="none"/></svg>
<div class="t" style="left:1659.5px;top:126.5px;color:#d4d4d4;letter-spacing:0.39px">Light</div>
<svg class="ic" style="left:1709px;top:124.5px" width="16" height="17" viewBox="0 0 16 17"><path d="M5.8 13.2A6 6 0 1 1 10.2 13.2" fill="none" stroke="#1fb7a6" stroke-width="1.1"/><circle cx="8" cy="7.5" r="1.3" fill="#1fb7a6"/><path d="M8 9v2.5M8 13v1.2M8 15.5v1" stroke="#1fb7a6" stroke-width="1.1"/></svg>
<svg class="ic" style="left:1600px;top:151px" width="11" height="7"><path d="M1 1l4.5 4.5L10 1" stroke="#6e6e6e" stroke-width="1.2" fill="none"/></svg>
<svg class="ic" style="left:1618px;top:147px;opacity:1" width="14" height="13" viewBox="0 0 14 13"><rect x=".5" y=".5" width="13" height="3.2" fill="#8a8a8a"/><path d="M1.5 4.5h11V12.5h-11z" fill="#8a8a8a"/><rect x="4.5" y="6" width="5" height="1.8" fill="#282828"/></svg>
<div class="t" style="left:1639.5px;top:146.5px;color:#8c8c8c;letter-spacing:0.22px">Soviet books</div>
<svg class="ic" style="left:1622px;top:167.5px" width="7" height="12"><path d="M1 1l4.5 5-4.5 5" stroke="#6e6e6e" stroke-width="1.2" fill="none"/></svg>
<svg class="ic" style="left:1637px;top:165px" width="16" height="16" viewBox="0 0 16 16"><path d="M8 1.5V9M8 9l7 .5M8 9l-6 5.5" stroke="#8a6a3d" stroke-width="2.2" stroke-linecap="round" fill="none"/></svg>
<div class="t" style="left:1659.5px;top:166.5px;color:#8c8c8c;letter-spacing:0.26px">Soviet book</div>
<svg class="ic" style="left:1745px;top:165.5px" width="15" height="15" viewBox="0 0 15 15"><path d="M.5 1h14L7.5 14zM4.5 3.5h6L7.5 9.5z" fill="#8a6a3d" fill-rule="evenodd"/></svg>
<div class="t" style="left:1758px;top:172px;font-size:9px;color:#ddd">2</div>
<svg class="ic" style="left:1622px;top:187.5px" width="7" height="12"><path d="M1 1l4.5 5-4.5 5" stroke="#6e6e6e" stroke-width="1.2" fill="none"/></svg>
<div class="a" style="left:1637px;top:185px;width:120px;height:7px;overflow:hidden"><div class="t" style="left:22.5px;top:1.5px;color:#8c8c8c">Soviet book.001</div><svg class="ic" style="left:0;top:1px" width="16" height="16" viewBox="0 0 16 16"><path d="M8 1.5V9" stroke="#8a6a3d" stroke-width="2.2" stroke-linecap="round"/></svg></div>
<svg class="ic" style="left:1776px;top:185.5px" width="15" height="6" viewBox="0 0 15 6"><path d="M.5 1h14v2H.5z" fill="#8a6a3d"/></svg>
<svg class="ic" style="left:1848px;top:68px" width="10.3" height="10.3" viewBox="0 0 11 11"><rect width="11" height="11" rx="1.5" fill="#e6e6e6"/><path d="M2 5.6l2.5 2.6 4.6-5.2" stroke="#1a1a1a" stroke-width="1.9" fill="none"/></svg>
<svg class="ic" style="left:1867px;top:68px" width="14" height="10" viewBox="0 0 14 10"><path d="M.6 5C3 -.2 11 -.2 13.4 5 11 10.2 3 10.2 .6 5z" fill="none" stroke="#e6e6e6" stroke-width="1.3"/><circle cx="7" cy="5" r="2.4" fill="#e6e6e6"/></svg>
<svg class="ic" style="left:1886.7px;top:66px" width="13.6" height="11.5" viewBox="0 0 14 12"><path d="M.5 2.8h3l1-2h5l1 2h3V11.5H.5z" fill="#e6e6e6"/><circle cx="7" cy="6.8" r="3.4" fill="#282828"/><circle cx="7" cy="6.8" r="2.5" fill="#e6e6e6"/><circle cx="7" cy="6.8" r="1.5" fill="#282828"/><circle cx="7" cy="6.8" r=".7" fill="#e6e6e6"/></svg>
<svg class="ic" style="left:1867px;top:88px" width="14" height="10" viewBox="0 0 14 10"><path d="M.6 5C3 -.2 11 -.2 13.4 5 11 10.2 3 10.2 .6 5z" fill="none" stroke="#e6e6e6" stroke-width="1.3"/><circle cx="7" cy="5" r="2.4" fill="#e6e6e6"/></svg>
<svg class="ic" style="left:1886.7px;top:86px" width="13.6" height="11.5" viewBox="0 0 14 12"><path d="M.5 2.8h3l1-2h5l1 2h3V11.5H.5z" fill="#e6e6e6"/><circle cx="7" cy="6.8" r="3.4" fill="#282828"/><circle cx="7" cy="6.8" r="2.5" fill="#e6e6e6"/><circle cx="7" cy="6.8" r="1.5" fill="#282828"/><circle cx="7" cy="6.8" r=".7" fill="#e6e6e6"/></svg>
<svg class="ic" style="left:1867px;top:108px" width="14" height="10" viewBox="0 0 14 10"><path d="M.6 5C3 -.2 11 -.2 13.4 5 11 10.2 3 10.2 .6 5z" fill="none" stroke="#e6e6e6" stroke-width="1.3"/><circle cx="7" cy="5" r="2.4" fill="#e6e6e6"/></svg>
<svg class="ic" style="left:1886.7px;top:106px" width="13.6" height="11.5" viewBox="0 0 14 12"><path d="M.5 2.8h3l1-2h5l1 2h3V11.5H.5z" fill="#e6e6e6"/><circle cx="7" cy="6.8" r="3.4" fill="#282828"/><circle cx="7" cy="6.8" r="2.5" fill="#e6e6e6"/><circle cx="7" cy="6.8" r="1.5" fill="#282828"/><circle cx="7" cy="6.8" r=".7" fill="#e6e6e6"/></svg>
<svg class="ic" style="left:1867px;top:128px" width="14" height="10" viewBox="0 0 14 10"><path d="M.6 5C3 -.2 11 -.2 13.4 5 11 10.2 3 10.2 .6 5z" fill="none" stroke="#e6e6e6" stroke-width="1.3"/><circle cx="7" cy="5" r="2.4" fill="#e6e6e6"/></svg>
<svg class="ic" style="left:1886.7px;top:126px" width="13.6" height="11.5" viewBox="0 0 14 12"><path d="M.5 2.8h3l1-2h5l1 2h3V11.5H.5z" fill="#e6e6e6"/><circle cx="7" cy="6.8" r="3.4" fill="#282828"/><circle cx="7" cy="6.8" r="2.5" fill="#e6e6e6"/><circle cx="7" cy="6.8" r="1.5" fill="#282828"/><circle cx="7" cy="6.8" r=".7" fill="#e6e6e6"/></svg>
<svg class="ic" style="left:1848px;top:148px" width="10.3" height="10.3" viewBox="0 0 11 11"><rect width="11" height="11" rx="1.5" fill="#e6e6e6"/><path d="M2 5.6l2.5 2.6 4.6-5.2" stroke="#1a1a1a" stroke-width="1.9" fill="none"/></svg>
<svg class="ic" style="left:1886.7px;top:146px" width="13.6" height="11.5" viewBox="0 0 14 12"><path d="M.5 2.8h3l1-2h5l1 2h3V11.5H.5z" fill="#e6e6e6"/><circle cx="7" cy="6.8" r="3.4" fill="#282828"/><circle cx="7" cy="6.8" r="2.5" fill="#e6e6e6"/><circle cx="7" cy="6.8" r="1.5" fill="#282828"/><circle cx="7" cy="6.8" r=".7" fill="#e6e6e6"/></svg>
<svg class="ic" style="left:1867px;top:151px" width="14" height="7"><path d="M.7 1q6.3 9 12.6 0" stroke="#555" stroke-width="1.1" fill="none"/></svg>
<svg class="ic" style="left:1867px;top:168px" width="14" height="10" viewBox="0 0 14 10"><path d="M.6 5C3 -.2 11 -.2 13.4 5 11 10.2 3 10.2 .6 5z" fill="none" stroke="#555" stroke-width="1.3"/><circle cx="7" cy="5" r="2.4" fill="#555"/></svg>
<svg class="ic" style="left:1886.7px;top:166px" width="13.6" height="11.5" viewBox="0 0 14 12"><path d="M.5 2.8h3l1-2h5l1 2h3V11.5H.5z" fill="#e6e6e6"/><circle cx="7" cy="6.8" r="3.4" fill="#282828"/><circle cx="7" cy="6.8" r="2.5" fill="#e6e6e6"/><circle cx="7" cy="6.8" r="1.5" fill="#282828"/><circle cx="7" cy="6.8" r=".7" fill="#e6e6e6"/></svg>
<div class="a" style="left:1866px;top:187px;width:38px;height:5px;overflow:hidden"><svg class="ic" style="left:20.4px;top:0px" width="13.6" height="11.5" viewBox="0 0 14 12"><path d="M.5 2.8h3l1-2h5l1 2h3V11.5H.5z" fill="#e6e6e6"/><circle cx="7" cy="6.8" r="3.4" fill="#282828"/></svg><svg class="ic" style="left:1px;top:1px" width="14" height="10" viewBox="0 0 14 10"><path d="M.6 5C3 -.2 11 -.2 13.4 5" fill="none" stroke="#555" stroke-width="1.3"/><circle cx="7" cy="5" r="2.9" fill="none" stroke="#555" stroke-width="1"/></svg></div>
<div class="a" style="left:1572px;top:192px;width:340px;height:3px;background:#181818"></div>
<!-- PROPERTIES -->
<div class="a" style="left:1574px;top:195px;width:340px;height:640px;background:#303030;border:1px solid #3a3a3a;border-radius:5px 0 0 0"></div>
<div class="a" style="left:1575px;top:221px;width:28px;height:610px;background:#181818"></div>
<div class="a" style="left:1577px;top:228.5px;width:26px;height:29.0px;background:#1d1d1d;border-radius:4px 0 0 4px"></div>
<div class="a" style="left:1577px;top:264px;width:26px;height:140.5px;background:#1d1d1d;border-radius:4px 0 0 4px"></div>
<div class="a" style="left:1577px;top:411.5px;width:26px;height:30.5px;background:#1d1d1d;border-radius:4px 0 0 4px"></div>
<div class="a" style="left:1577px;top:448.5px;width:26px;height:196.5px;background:#1d1d1d;border-radius:4px 0 0 4px"></div>
<div class="a" style="left:1577px;top:448.5px;width:27px;height:28px;background:#303030;border-radius:4px 0 0 4px"></div>
<div class="btn" style="left:1583.5px;top:197px;width:32px;height:20px"></div>
<svg class="ic" style="left:1587px;top:199px" width="16" height="16" viewBox="0 0 16 16"><rect x=".8" y="1.3" width="13" height="5.4" rx="2.7" fill="none" stroke="#e6e6e6" stroke-width="1.2"/><rect x=".8" y="9.3" width="13" height="5.4" rx="2.7" fill="none" stroke="#e6e6e6" stroke-width="1.2"/><path d="M3.5 1.3h3v5.4h-3a2.7 2.7 0 0 1 0-5.4zM3.5 9.3h6v5.4h-6a2.7 2.7 0 0 1 0-5.4z" fill="#e6e6e6"/></svg>
<svg class="ic" style="left:1604.5px;top:205px" width="8" height="8"><path d="M1 1l3.5 3 3.5-3" stroke="#e6e6e6" stroke-width="1.2" fill="none"/></svg>
<div class="fld" style="left:1685px;top:197.5px;width:119px;height:19.5px"></div>
<svg class="ic" style="left:1689px;top:199px" width="16" height="16" viewBox="0 0 16 16"><circle cx="6.5" cy="6.5" r="4.3" fill="none" stroke="#e6e6e6" stroke-width="1.2"/><path d="M9.7 9.7L14 14" stroke="#e6e6e6" stroke-width="1.4"/></svg>
<div class="t" style="left:1711px;top:200px;color:#7a7a7a;letter-spacing:-0.33px">Search</div>
<div class="btn" style="left:1885.5px;top:197px;width:24px;height:20px"></div>
<svg class="ic" style="left:1891px;top:205px" width="8" height="8"><path d="M1 1l3.5 3 3.5-3" stroke="#e6e6e6" stroke-width="1.2" fill="none"/></svg>
<svg class="ic" style="left:1581.0px;top:234.0px" width="18" height="18" viewBox="0 0 18 18"><path d="M4.5 2v7M3 9.5h3l.5 4.5a2 2 0 0 1-4 0z" stroke="#d8d8d8" stroke-width="1.3" fill="#d8d8d8"/><path d="M11 2.5a3.2 3.2 0 0 0 1.2 5.5v7a1.3 1.3 0 0 0 2.6 0V8A3.2 3.2 0 0 0 16 2.5v3h-2.5l-1-1z" fill="#d8d8d8"/></svg>
<svg class="ic" style="left:1581.0px;top:269.0px" width="18" height="18" viewBox="0 0 18 18"><path d="M2 6h14v9H2z" fill="none" stroke="#d8d8d8" stroke-width="1.3"/><path d="M5 6V3.5h5V6M12 3l3-1" stroke="#d8d8d8" stroke-width="1.3" fill="none"/><path d="M4 8.5h7v4.5H4z" fill="#d8d8d8"/><path d="M13 9h1.5M13 11.5h1.5" stroke="#d8d8d8" stroke-width="1.2"/></svg>
<svg class="ic" style="left:1581.0px;top:297.0px" width="18" height="18" viewBox="0 0 18 18"><path d="M2.5 3h13v6h-13z" fill="#d8d8d8"/><path d="M4.5 9.5v6h9v-6" fill="none" stroke="#d8d8d8" stroke-width="1.3"/><path d="M6 14.5l2.5-3.5 1.5 2 1-1 1.5 2.5z" fill="#d8d8d8"/></svg>
<svg class="ic" style="left:1581.0px;top:325.0px" width="18" height="18" viewBox="0 0 18 18"><path d="M2 6.5v9.5h10M4 4.5v9.5h10" stroke="#aaa" stroke-width="1" fill="none"/><rect x="6.5" y="2" width="9.5" height="9.5" fill="none" stroke="#d8d8d8" stroke-width="1.3"/><path d="M7.5 10.5l3.5-5.5 2 3 1-1 1 3.5z" fill="#d8d8d8"/><circle cx="13.5" cy="4.5" r="1" fill="#d8d8d8"/></svg>
<svg class="ic" style="left:1581.0px;top:353.0px" width="18" height="18" viewBox="0 0 18 18"><path d="M6 2l4.5 11H1.5z" fill="#bdbdbd"/><circle cx="14.5" cy="4" r="1.8" fill="#d8d8d8"/><circle cx="12" cy="12.5" r="3.5" fill="#1d1d1d" stroke="#d8d8d8" stroke-width="1.2"/><circle cx="11" cy="11.5" r="1" fill="#d8d8d8"/></svg>
<svg class="ic" style="left:1581.0px;top:381.0px" width="18" height="18" viewBox="0 0 18 18"><circle cx="9" cy="9" r="6.3" fill="none" stroke="#d2584a" stroke-width="1.3"/><path d="M5.5 5.5c2.5-1.5 4 0 4.5 1.5S8 10 7 10.5 4.5 8 5.5 5.5zM10 11c1-1 3.5-1 3.5.2S12 14 11 14s-1.5-2-1-3z" fill="#d2584a"/><path d="M2.5 15.5L15.5 2.5" stroke="#d2584a" stroke-width="1.1"/></svg>
<svg class="ic" style="left:1581.0px;top:417.5px" width="18" height="18" viewBox="0 0 18 18"><rect x="1.5" y="2" width="15" height="3.5" fill="none" stroke="#d8d8d8" stroke-width="1.3"/><path d="M3 5.5v10h12v-10" fill="none" stroke="#d8d8d8" stroke-width="1.3"/><rect x="6.5" y="8.5" width="5" height="2" fill="#d8d8d8"/></svg>
<svg class="ic" style="left:1581.0px;top:454.0px" width="18" height="18" viewBox="0 0 18 18"><rect x="4.5" y="4.5" width="9" height="9" fill="#e8963f"/><path d="M1.5 5.5V1.5h4M12.5 1.5h4v4M16.5 12.5v4h-4M5.5 16.5h-4v-4" stroke="#c8965a" stroke-width="1" fill="none"/></svg>
<svg class="ic" style="left:1581.0px;top:482.0px" width="18" height="18" viewBox="0 0 18 18"><path d="M12 1.5a4.5 4.5 0 0 0-4.2 6L2 13.5a1.8 1.8 0 0 0 2.6 2.6l5.9-5.9a4.5 4.5 0 0 0 6-4.2l-2.5 2.5-2.5-.7-.7-2.5 2.5-2.5a4.5 4.5 0 0 0-1.3-.3z" fill="#5b83c8"/></svg>
<svg class="ic" style="left:1581.0px;top:510.0px" width="18" height="18" viewBox="0 0 18 18"><circle cx="4" cy="4" r="2.3" fill="#5b83c8"/><path d="M4 4l10 0M4 4l9.5 9.5M4 4l0 10" stroke="#5b83c8" stroke-width="1.1"/><circle cx="14.5" cy="4" r="1.3" fill="#5b83c8"/><circle cx="13.5" cy="13.5" r="1.5" fill="#5b83c8"/><circle cx="4" cy="14.5" r="1.3" fill="#5b83c8"/></svg>
<svg class="ic" style="left:1581.0px;top:538.0px" width="18" height="18" viewBox="0 0 18 18"><path d="M14 13.5A6.3 6.3 0 1 1 14 4.5" fill="none" stroke="#5b83c8" stroke-width="1.3"/><circle cx="9" cy="9" r="2.6" fill="#5b83c8"/><circle cx="15" cy="3.5" r="1.3" fill="#5b83c8"/></svg>
<svg class="ic" style="left:1581.0px;top:566.0px" width="18" height="18" viewBox="0 0 18 18"><path d="M15.5 1.5c1.5 1 .5 4-1.5 6.5l-3.5 5.5A5 5 0 1 1 4.5 6.5l6.5-3.5c2-1 3.5-2 4.5-1.5z" fill="none" stroke="#5b83c8" stroke-width="1.2"/><circle cx="7" cy="11" r="2.7" fill="none" stroke="#5b83c8" stroke-width="1.2"/><circle cx="7" cy="11" r="1" fill="#5b83c8"/></svg>
<svg class="ic" style="left:1581.0px;top:594.0px" width="18" height="18" viewBox="0 0 18 18"><path d="M3 3h12L9 15z" fill="none" stroke="#1fb7a6" stroke-width="1.3"/><g fill="#1d1d1d" stroke="#1fb7a6" stroke-width="1.1"><rect x="1.5" y="1.5" width="3" height="3"/><rect x="13.5" y="1.5" width="3" height="3"/><rect x="7.5" y="13.5" width="3" height="3"/></g></svg>
<svg class="ic" style="left:1581.0px;top:622.0px" width="18" height="18" viewBox="0 0 18 18"><circle cx="9" cy="9" r="6.5" fill="none" stroke="#d0614e" stroke-width="1.4"/><path d="M9 9V2.5A6.5 6.5 0 0 0 2.5 9zM9 9v6.5A6.5 6.5 0 0 0 15.5 9z" fill="#d0614e"/></svg>
<svg class="ic" style="left:1585px;top:659px" width="11" height="7"><path d="M1 1l4.5 4.5L10 1" stroke="#555" stroke-width="1.2" fill="none"/></svg>
<svg class="ic" style="left:1613px;top:231px" width="16" height="16" viewBox="0 0 16 16"><rect x="4" y="4" width="8" height="8" fill="#e6e6e6"/><path d="M2 5.5V2h3.5M10.5 2H14v3.5M14 10.5V14h-3.5M5.5 14H2v-3.5" stroke="#cfc5b5" stroke-width=".9" fill="none"/></svg>
<div class="t" style="left:1637px;top:232.5px;letter-spacing:0.3px">Cube</div>
<svg class="ic" style="left:1887px;top:231px" width="16" height="16" viewBox="0 0 16 16"><path d="M9.5 1.5l5 5-1.5.3-2.5 2.5.2 3-1.2 1.2-6-6 1.2-1.2 3 .2 2.5-2.5zM6 10l-4.5 4.5" fill="none" stroke="#b0b0b0" stroke-width="1.1" stroke-linejoin="round"/></svg>
<div class="fld" style="left:1611.5px;top:265px;width:300px;height:20px"></div>
<div class="a" style="left:1612.5px;top:266px;width:30px;height:18px;background:#282828;border-right:1px solid #3d3d3d;border-radius:3px 0 0 3px"></div>
<svg class="ic" style="left:1615px;top:267px" width="16" height="16" viewBox="0 0 16 16"><rect x="4" y="4" width="8" height="8" fill="#e6e6e6"/><path d="M2 5.5V2h3.5M10.5 2H14v3.5M14 10.5V14h-3.5M5.5 14H2v-3.5" stroke="#cfc5b5" stroke-width=".9" fill="none"/></svg>
<svg class="ic" style="left:1632.5px;top:273px" width="8" height="8"><path d="M1 1l3.5 3 3.5-3" stroke="#e6e6e6" stroke-width="1.2" fill="none"/></svg>
<div class="t" style="left:1650px;top:268px;letter-spacing:0.3px">Cube</div>
<div class="pan" style="top:295px;height:280.5px"></div>
<svg class="ic" style="left:1619.5px;top:306px" width="11" height="7"><path d="M1 1l4.5 4.5L10 1" stroke="#c8c8c8" stroke-width="1.2" fill="none"/></svg>
<div class="t" style="left:1633px;top:301px;letter-spacing:0.25px">Transform</div>
<svg class="ic" style="left:1884px;top:307px" width="12" height="5"><g fill="#868686"><rect x="1" y="0" width="1" height="1"/><rect x="4" y="0" width="1" height="1"/><rect x="7" y="0" width="1" height="1"/><rect x="10" y="0" width="1" height="1"/><rect x="1" y="3" width="1" height="1"/><rect x="4" y="3" width="1" height="1"/><rect x="7" y="3" width="1" height="1"/><rect x="10" y="3" width="1" height="1"/></g></svg>
<div class="num" style="top:328.7px;height:18.7px;line-height:18.7px;border-radius:4px 4px 0 0;letter-spacing:0.16px">0 m</div>
<div class="lbl" style="top:331.2px;letter-spacing:0.24px">Location X</div>
<svg class="ic" style="left:1861px;top:329.7px" width="12" height="15" viewBox="0 0 12 15"><rect x="2" y="7" width="8" height="6.5" rx="1" fill="none" stroke="#c0c0c0" stroke-width="1"/><path d="M4 7V4a2.3 2.3 0 0 1 4.6 0v.8" fill="none" stroke="#c0c0c0" stroke-width="1"/></svg>
<div class="a" style="left:1885px;top:336.2px;width:4px;height:4px;border-radius:2px;background:#e0e0e0"></div>
<div class="num" style="top:348.4px;height:18.7px;line-height:18.7px;border-radius:0;letter-spacing:0.16px">0 m</div>
<div class="lbl" style="top:350.9px">Y</div>
<svg class="ic" style="left:1861px;top:349.4px" width="12" height="15" viewBox="0 0 12 15"><rect x="2" y="7" width="8" height="6.5" rx="1" fill="none" stroke="#c0c0c0" stroke-width="1"/><path d="M4 7V4a2.3 2.3 0 0 1 4.6 0v.8" fill="none" stroke="#c0c0c0" stroke-width="1"/></svg>
<div class="a" style="left:1885px;top:355.9px;width:4px;height:4px;border-radius:2px;background:#e0e0e0"></div>
<div class="num" style="top:368.09999999999997px;height:18.7px;line-height:18.7px;border-radius:0 0 4px 4px;letter-spacing:0.16px">0 m</div>
<div class="lbl" style="top:370.59999999999997px">Z</div>
<svg class="ic" style="left:1861px;top:369.09999999999997px" width="12" height="15" viewBox="0 0 12 15"><rect x="2" y="7" width="8" height="6.5" rx="1" fill="none" stroke="#c0c0c0" stroke-width="1"/><path d="M4 7V4a2.3 2.3 0 0 1 4.6 0v.8" fill="none" stroke="#c0c0c0" stroke-width="1"/></svg>
<div class="a" style="left:1885px;top:375.59999999999997px;width:4px;height:4px;border-radius:2px;background:#e0e0e0"></div>
<div class="num" style="top:393.5px;height:18.7px;line-height:18.7px;border-radius:4px 4px 0 0">0°</div>
<div class="lbl" style="top:396.0px;letter-spacing:0.17px">Rotation X</div>
<svg class="ic" style="left:1861px;top:394.5px" width="12" height="15" viewBox="0 0 12 15"><rect x="2" y="7" width="8" height="6.5" rx="1" fill="none" stroke="#c0c0c0" stroke-width="1"/><path d="M4 7V4a2.3 2.3 0 0 1 4.6 0v.8" fill="none" stroke="#c0c0c0" stroke-width="1"/></svg>
<div class="a" style="left:1885px;top:401.0px;width:4px;height:4px;border-radius:2px;background:#e0e0e0"></div>
<div class="num" style="top:413.2px;height:18.7px;line-height:18.7px;border-radius:0">0°</div>
<div class="lbl" style="top:415.7px">Y</div>
<svg class="ic" style="left:1861px;top:414.2px" width="12" height="15" viewBox="0 0 12 15"><rect x="2" y="7" width="8" height="6.5" rx="1" fill="none" stroke="#c0c0c0" stroke-width="1"/><path d="M4 7V4a2.3 2.3 0 0 1 4.6 0v.8" fill="none" stroke="#c0c0c0" stroke-width="1"/></svg>
<div class="a" style="left:1885px;top:420.7px;width:4px;height:4px;border-radius:2px;background:#e0e0e0"></div>
<div class="num" style="top:432.9px;height:18.7px;line-height:18.7px;border-radius:0 0 4px 4px">0°</div>
<div class="lbl" style="top:435.4px">Z</div>
<svg class="ic" style="left:1861px;top:433.9px" width="12" height="15" viewBox="0 0 12 15"><rect x="2" y="7" width="8" height="6.5" rx="1" fill="none" stroke="#c0c0c0" stroke-width="1"/><path d="M4 7V4a2.3 2.3 0 0 1 4.6 0v.8" fill="none" stroke="#c0c0c0" stroke-width="1"/></svg>
<div class="a" style="left:1885px;top:440.4px;width:4px;height:4px;border-radius:2px;background:#e0e0e0"></div>
<div class="lbl" style="top:461px;letter-spacing:0.41px">Mode</div>
<div class="btn" style="left:1728px;top:458.5px;width:128.5px;height:19px;border-color:#3a3a3a"></div>
<div class="t" style="left:1735px;top:461px">XYZ Euler</div>
<svg class="ic" style="left:1845px;top:466px" width="8" height="8"><path d="M1 1l3.5 3 3.5-3" stroke="#e6e6e6" stroke-width="1.2" fill="none"/></svg>
<div class="a" style="left:1885px;top:466px;width:4px;height:4px;border-radius:2px;background:#e0e0e0"></div>
<div class="num" style="top:483.5px;height:18.7px;line-height:18.7px;border-radius:4px 4px 0 0;letter-spacing:0.4px">1.000</div>
<div class="lbl" style="top:486.0px;letter-spacing:-0.16px">Scale X</div>
<svg class="ic" style="left:1861px;top:484.5px" width="12" height="15" viewBox="0 0 12 15"><rect x="2" y="7" width="8" height="6.5" rx="1" fill="none" stroke="#c0c0c0" stroke-width="1"/><path d="M4 7V4a2.3 2.3 0 0 1 4.6 0v.8" fill="none" stroke="#c0c0c0" stroke-width="1"/></svg>
<div class="a" style="left:1885px;top:491.0px;width:4px;height:4px;border-radius:2px;background:#e0e0e0"></div>
<div class="num" style="top:503.2px;height:18.7px;line-height:18.7px;border-radius:0;letter-spacing:0.4px">1.000</div>
<div class="lbl" style="top:505.7px">Y</div>
<svg class="ic" style="left:1861px;top:504.2px" width="12" height="15" viewBox="0 0 12 15"><rect x="2" y="7" width="8" height="6.5" rx="1" fill="none" stroke="#c0c0c0" stroke-width="1"/><path d="M4 7V4a2.3 2.3 0 0 1 4.6 0v.8" fill="none" stroke="#c0c0c0" stroke-width="1"/></svg>
<div class="a" style="left:1885px;top:510.7px;width:4px;height:4px;border-radius:2px;background:#e0e0e0"></div>
<div class="num" style="top:522.9px;height:18.7px;line-height:18.7px;border-radius:0 0 4px 4px;letter-spacing:0.4px">1.000</div>
<div class="lbl" style="top:525.4px">Z</div>
<svg class="ic" style="left:1861px;top:523.9px" width="12" height="15" viewBox="0 0 12 15"><rect x="2" y="7" width="8" height="6.5" rx="1" fill="none" stroke="#c0c0c0" stroke-width="1"/><path d="M4 7V4a2.3 2.3 0 0 1 4.6 0v.8" fill="none" stroke="#c0c0c0" stroke-width="1"/></svg>
<div class="a" style="left:1885px;top:530.4px;width:4px;height:4px;border-radius:2px;background:#e0e0e0"></div>
<svg class="ic" style="left:1636px;top:557.5px" width="7" height="12"><path d="M1 1l4.5 5-4.5 5" stroke="#c8c8c8" stroke-width="1.2" fill="none"/></svg>
<div class="t" style="left:1647px;top:557px;letter-spacing:0.16px">Delta Transform</div>
<div class="pan" style="top:578px;height:24.5px"></div>
<svg class="ic" style="left:1621.5px;top:584.5px" width="7" height="12"><path d="M1 1l4.5 5-4.5 5" stroke="#c8c8c8" stroke-width="1.2" fill="none"/></svg>
<div class="t" style="left:1633px;top:583.5px">Relations</div>
<svg class="ic" style="left:1884px;top:589.5px" width="12" height="5"><g fill="#868686"><rect x="1" y="0" width="1" height="1"/><rect x="4" y="0" width="1" height="1"/><rect x="7" y="0" width="1" height="1"/><rect x="10" y="0" width="1" height="1"/><rect x="1" y="3" width="1" height="1"/><rect x="4" y="3" width="1" height="1"/><rect x="7" y="3" width="1" height="1"/><rect x="10" y="3" width="1" height="1"/></g></svg>
<div class="pan" style="top:605px;height:24.5px"></div>
<svg class="ic" style="left:1621.5px;top:611.5px" width="7" height="12"><path d="M1 1l4.5 5-4.5 5" stroke="#c8c8c8" stroke-width="1.2" fill="none"/></svg>
<div class="t" style="left:1633px;top:610.5px;letter-spacing:0.34px">Collections</div>
<svg class="ic" style="left:1884px;top:616.5px" width="12" height="5"><g fill="#868686"><rect x="1" y="0" width="1" height="1"/><rect x="4" y="0" width="1" height="1"/><rect x="7" y="0" width="1" height="1"/><rect x="10" y="0" width="1" height="1"/><rect x="1" y="3" width="1" height="1"/><rect x="4" y="3" width="1" height="1"/><rect x="7" y="3" width="1" height="1"/><rect x="10" y="3" width="1" height="1"/></g></svg>
<div class="pan" style="top:632px;height:24.5px"></div>
<svg class="ic" style="left:1621.5px;top:638.5px" width="7" height="12"><path d="M1 1l4.5 5-4.5 5" stroke="#c8c8c8" stroke-width="1.2" fill="none"/></svg>
<div class="t" style="left:1633px;top:637.5px;letter-spacing:0.58px">Instancing</div>
<svg class="ic" style="left:1884px;top:643.5px" width="12" height="5"><g fill="#868686"><rect x="1" y="0" width="1" height="1"/><rect x="4" y="0" width="1" height="1"/><rect x="7" y="0" width="1" height="1"/><rect x="10" y="0" width="1" height="1"/><rect x="1" y="3" width="1" height="1"/><rect x="4" y="3" width="1" height="1"/><rect x="7" y="3" width="1" height="1"/><rect x="10" y="3" width="1" height="1"/></g></svg>
<div class="pan" style="top:659px;height:24.5px"></div>
<svg class="ic" style="left:1621.5px;top:665.5px" width="7" height="12"><path d="M1 1l4.5 5-4.5 5" stroke="#c8c8c8" stroke-width="1.2" fill="none"/></svg>
<div class="t" style="left:1633px;top:664.5px;letter-spacing:0.33px">Motion Paths</div>
<svg class="ic" style="left:1884px;top:670.5px" width="12" height="5"><g fill="#868686"><rect x="1" y="0" width="1" height="1"/><rect x="4" y="0" width="1" height="1"/><rect x="7" y="0" width="1" height="1"/><rect x="10" y="0" width="1" height="1"/><rect x="1" y="3" width="1" height="1"/><rect x="4" y="3" width="1" height="1"/><rect x="7" y="3" width="1" height="1"/><rect x="10" y="3" width="1" height="1"/></g></svg>
<div class="pan" style="top:686px;height:24.5px"></div>
<svg class="ic" style="left:1621.5px;top:692.5px" width="7" height="12"><path d="M1 1l4.5 5-4.5 5" stroke="#c8c8c8" stroke-width="1.2" fill="none"/></svg>
<div class="t" style="left:1633px;top:691.5px;letter-spacing:0.23px">Shading</div>
<svg class="ic" style="left:1884px;top:697.5px" width="12" height="5"><g fill="#868686"><rect x="1" y="0" width="1" height="1"/><rect x="4" y="0" width="1" height="1"/><rect x="7" y="0" width="1" height="1"/><rect x="10" y="0" width="1" height="1"/><rect x="1" y="3" width="1" height="1"/><rect x="4" y="3" width="1" height="1"/><rect x="7" y="3" width="1" height="1"/><rect x="10" y="3" width="1" height="1"/></g></svg>
<div class="pan" style="top:713px;height:24.5px"></div>
<svg class="ic" style="left:1621.5px;top:719.5px" width="7" height="12"><path d="M1 1l4.5 5-4.5 5" stroke="#c8c8c8" stroke-width="1.2" fill="none"/></svg>
<div class="t" style="left:1633px;top:718.5px;letter-spacing:0.53px">Visibility</div>
<svg class="ic" style="left:1884px;top:724.5px" width="12" height="5"><g fill="#868686"><rect x="1" y="0" width="1" height="1"/><rect x="4" y="0" width="1" height="1"/><rect x="7" y="0" width="1" height="1"/><rect x="10" y="0" width="1" height="1"/><rect x="1" y="3" width="1" height="1"/><rect x="4" y="3" width="1" height="1"/><rect x="7" y="3" width="1" height="1"/><rect x="10" y="3" width="1" height="1"/></g></svg>
<div class="pan" style="top:740px;height:24.5px"></div>
<svg class="ic" style="left:1621.5px;top:746.5px" width="7" height="12"><path d="M1 1l4.5 5-4.5 5" stroke="#c8c8c8" stroke-width="1.2" fill="none"/></svg>
<div class="t" style="left:1633px;top:745.5px;letter-spacing:0.3px">Viewport Display</div>
<svg class="ic" style="left:1884px;top:751.5px" width="12" height="5"><g fill="#868686"><rect x="1" y="0" width="1" height="1"/><rect x="4" y="0" width="1" height="1"/><rect x="7" y="0" width="1" height="1"/><rect x="10" y="0" width="1" height="1"/><rect x="1" y="3" width="1" height="1"/><rect x="4" y="3" width="1" height="1"/><rect x="7" y="3" width="1" height="1"/><rect x="10" y="3" width="1" height="1"/></g></svg>
<div class="pan" style="top:767px;height:24.5px"></div>
<svg class="ic" style="left:1621.5px;top:773.5px" width="7" height="12"><path d="M1 1l4.5 5-4.5 5" stroke="#c8c8c8" stroke-width="1.2" fill="none"/></svg>
<div class="t" style="left:1633px;top:772.5px;letter-spacing:0.23px">Line Art</div>
<svg class="ic" style="left:1884px;top:778.5px" width="12" height="5"><g fill="#868686"><rect x="1" y="0" width="1" height="1"/><rect x="4" y="0" width="1" height="1"/><rect x="7" y="0" width="1" height="1"/><rect x="10" y="0" width="1" height="1"/><rect x="1" y="3" width="1" height="1"/><rect x="4" y="3" width="1" height="1"/><rect x="7" y="3" width="1" height="1"/><rect x="10" y="3" width="1" height="1"/></g></svg>
<div class="pan" style="top:794px;height:24.5px"></div>
<svg class="ic" style="left:1621.5px;top:800.5px" width="7" height="12"><path d="M1 1l4.5 5-4.5 5" stroke="#c8c8c8" stroke-width="1.2" fill="none"/></svg>
<div class="t" style="left:1633px;top:799.5px;letter-spacing:0.43px">Animation</div>
<svg class="ic" style="left:1884px;top:805.5px" width="12" height="5"><g fill="#868686"><rect x="1" y="0" width="1" height="1"/><rect x="4" y="0" width="1" height="1"/><rect x="7" y="0" width="1" height="1"/><rect x="10" y="0" width="1" height="1"/><rect x="1" y="3" width="1" height="1"/><rect x="4" y="3" width="1" height="1"/><rect x="7" y="3" width="1" height="1"/><rect x="10" y="3" width="1" height="1"/></g></svg>
<div class="pan" style="top:821px;height:24.5px"></div>
</div></body></html>
